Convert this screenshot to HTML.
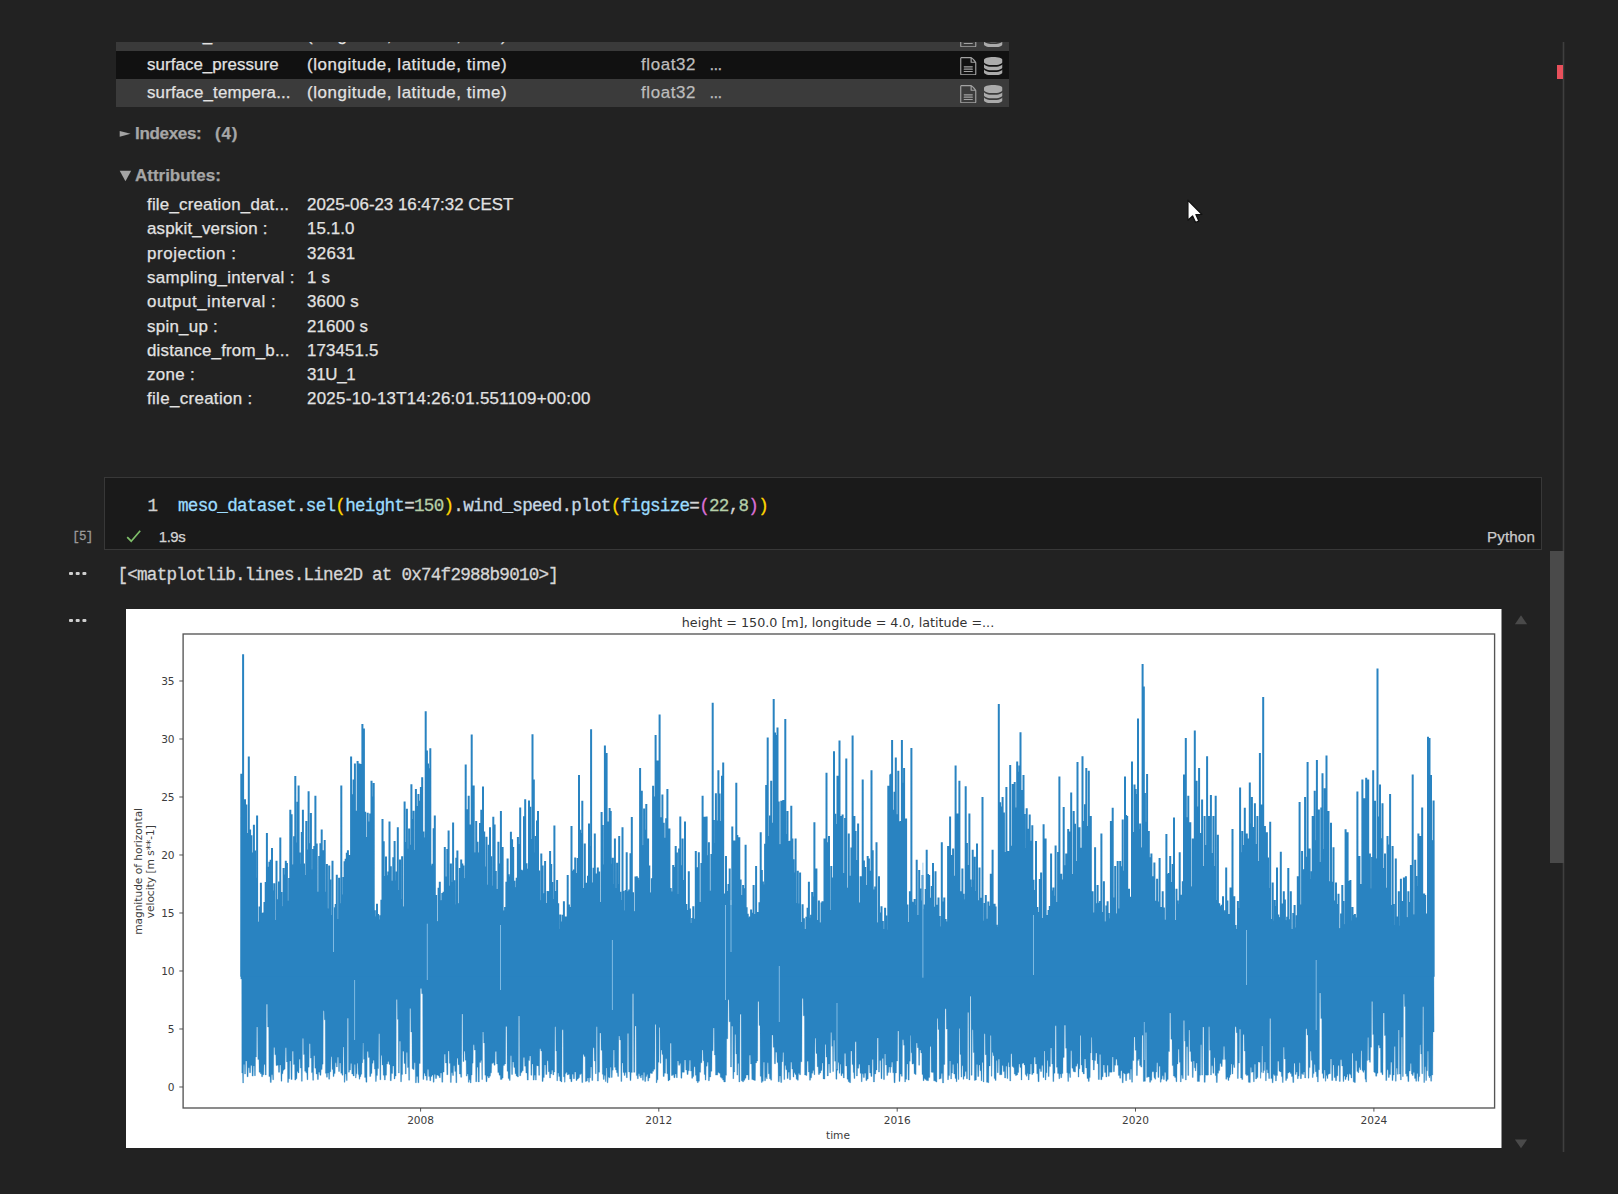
<!DOCTYPE html>
<html lang="en">
<head>
<meta charset="utf-8">
<title>Notebook output</title>
<style>
html,body{margin:0;padding:0;}
body{width:1618px;height:1194px;overflow:hidden;background:#222222;position:relative;
  font-family:"Liberation Sans","DejaVu Sans",sans-serif;color:#e4e4e4;}
.abs{position:absolute;white-space:nowrap;}
.ui{font-family:"Liberation Sans","DejaVu Sans",sans-serif;font-size:16.9px;line-height:20px;color:#e2e2e2;-webkit-text-stroke:0.25px;}
.row{position:absolute;left:116px;width:893px;}
.mono{font-family:"Liberation Mono","DejaVu Sans Mono",monospace;-webkit-text-stroke:0.3px;}
.hdr{font-weight:bold;color:#a6a6a6;font-size:17px;}
.dim{color:#bdbdbd;}
</style>
</head>
<body>

<!-- xarray variable table (scrolled) -->
<div class="row" style="top:42px;height:9px;background:#3a3a3a;overflow:hidden;">
  <div class="abs ui" style="left:31px;top:-16px;letter-spacing:0.069px;">surface_latent...</div>
  <div class="abs ui" style="left:191px;top:-16px;letter-spacing:0.564px;">(longitude, latitude, time)</div>
  <div class="abs ui dim" style="left:525px;top:-16px;letter-spacing:0.626px;">float32 &nbsp;...</div>
</div>
<div class="row" style="top:51px;height:28px;background:#111111;"></div>
<div class="row" style="top:79px;height:28px;background:#3b3b3b;"></div>

<div class="abs ui" id="t_sp" style="letter-spacing:0.069px;left:147px;top:55px;">surface_pressure</div>
<div class="abs ui" id="t_sp2" style="letter-spacing:0.564px;left:307px;top:55px;">(longitude, latitude, time)</div>
<div class="abs ui dim" id="t_sp3" style="letter-spacing:0.626px;left:641px;top:55px;">float32</div>
<div class="abs ui dim" style="left:709.5px;top:55px;letter-spacing:-0.7px;">...</div>

<div class="abs ui" id="t_st" style="letter-spacing:0.16px;left:147px;top:83px;">surface_tempera...</div>
<div class="abs ui" id="t_st2" style="letter-spacing:0.564px;left:307px;top:83px;">(longitude, latitude, time)</div>
<div class="abs ui dim" id="t_st3" style="letter-spacing:0.626px;left:641px;top:83px;">float32</div>
<div class="abs ui dim" style="left:709.5px;top:83px;letter-spacing:-0.7px;">...</div>

<svg width="0" height="0" style="position:absolute"><defs><symbol id="ic-doc" viewBox="0 0 32 32"><path d="M28.681 7.159c-0.694-0.947-1.662-2.053-2.724-3.116s-2.169-2.030-3.116-2.724c-1.612-1.182-2.393-1.319-2.841-1.319h-15.5c-1.378 0-2.5 1.121-2.5 2.5v27c0 1.378 1.122 2.5 2.5 2.5h23c1.378 0 2.5-1.122 2.5-2.5v-19.5c0-0.448-0.137-1.23-1.319-2.841zM24.543 5.457c0.959 0.959 1.712 1.825 2.268 2.543h-4.811v-4.811c0.718 0.556 1.584 1.309 2.543 2.268zM28 29.5c0 0.271-0.229 0.5-0.5 0.5h-23c-0.271 0-0.5-0.229-0.5-0.5v-27c0-0.271 0.229-0.5 0.5-0.5 0 0 15.499-0 15.500 0v7c0 0.552 0.448 1 1 1h7v19.500z"/><path d="M23 26h-14c-0.552 0-1-0.448-1-1s0.448-1 1-1h14c0.552 0 1 0.448 1 1s-0.448 1-1 1z"/><path d="M23 22h-14c-0.552 0-1-0.448-1-1s0.448-1 1-1h14c0.552 0 1 0.448 1 1s-0.448 1-1 1z"/><path d="M23 18h-14c-0.552 0-1-0.448-1-1s0.448-1 1-1h14c0.552 0 1 0.448 1 1s-0.448 1-1 1z"/></symbol><symbol id="ic-db" viewBox="0 0 32 32"><path d="M16 0c-8.837 0-16 2.239-16 5v4c0 2.761 7.163 5 16 5s16-2.239 16-5v-4c0-2.761-7.163-5-16-5z"/><path d="M16 17c-8.837 0-16-2.239-16-5v6c0 2.761 7.163 5 16 5s16-2.239 16-5v-6c0 2.761-7.163 5-16 5z"/><path d="M16 26c-8.837 0-16-2.239-16-5v6c0 2.761 7.163 5 16 5s16-2.239 16-5v-6c0 2.761-7.163 5-16 5z"/></symbol></defs></svg>
<div class="abs" style="left:958.5px;top:42px;width:50px;height:5.3px;overflow:hidden;"><svg class="abs" style="left:0;top:-13.2px;fill:#a2a2a2" width="18.5" height="18.5"><use href="#ic-doc"/></svg><svg class="abs" style="left:25.7px;top:-13.2px;fill:#ababab" width="18.5" height="18.5"><use href="#ic-db"/></svg></div>
<svg class="abs" style="left:958.5px;top:56.8px;fill:#a2a2a2" width="18.5" height="18.5"><use href="#ic-doc"/></svg>
<svg class="abs" style="left:984.2px;top:56.8px;fill:#ababab" width="18.5" height="18.5"><use href="#ic-db"/></svg>
<svg class="abs" style="left:958.5px;top:84.8px;fill:#a2a2a2" width="18.5" height="18.5"><use href="#ic-doc"/></svg>
<svg class="abs" style="left:984.2px;top:84.8px;fill:#ababab" width="18.5" height="18.5"><use href="#ic-db"/></svg>

<!-- sections -->
<svg class="abs" style="left:119px;top:130px;" width="13" height="8" viewBox="0 0 13 8"><path d="M0.7 0.9 L11.6 3.8 L0.7 6.7 Z" fill="#a4a4a4"/></svg>
<div class="abs ui hdr" id="t_idx" style="letter-spacing:-0.323px;left:135px;top:124px;">Indexes:</div>
<div class="abs ui hdr" id="t_idxn" style="letter-spacing:0.773px;left:215px;top:124px;">(4)</div>
<svg class="abs" style="left:119px;top:170px;" width="13" height="12" viewBox="0 0 13 12"><path d="M0.7 0.8 L12.2 0.8 L6.45 11.2 Z" fill="#a4a4a4"/></svg>
<div class="abs ui hdr" id="t_att" style="letter-spacing:-0.014px;left:135px;top:165.5px;">Attributes:</div>

<div class="abs ui" id="ak0" style="letter-spacing:0.208px;left:147px;top:195px;">file_creation_dat...</div>
<div class="abs ui" id="av0" style="letter-spacing:-0.016px;left:307px;top:195px;">2025-06-23 16:47:32 CEST</div>
<div class="abs ui" id="ak1" style="letter-spacing:0.203px;left:147px;top:219px;">aspkit_version :</div>
<div class="abs ui" id="av1" style="letter-spacing:0.105px;left:307px;top:219px;">15.1.0</div>
<div class="abs ui" id="ak2" style="letter-spacing:0.581px;left:147px;top:244px;">projection :</div>
<div class="abs ui" id="av2" style="letter-spacing:0.323px;left:307px;top:244px;">32631</div>
<div class="abs ui" id="ak3" style="letter-spacing:0.362px;left:147px;top:268px;">sampling_interval :</div>
<div class="abs ui" id="av3" style="letter-spacing:0.151px;left:307px;top:268px;">1 s</div>
<div class="abs ui" id="ak4" style="letter-spacing:0.529px;left:147px;top:292px;">output_interval :</div>
<div class="abs ui" id="av4" style="letter-spacing:0.18px;left:307px;top:292px;">3600 s</div>
<div class="abs ui" id="ak5" style="letter-spacing:0.271px;left:147px;top:317px;">spin_up :</div>
<div class="abs ui" id="av5" style="letter-spacing:0.142px;left:307px;top:317px;">21600 s</div>
<div class="abs ui" id="ak6" style="letter-spacing:0.203px;left:147px;top:341px;">distance_from_b...</div>
<div class="abs ui" id="av6" style="letter-spacing:0.131px;left:307px;top:341px;">173451.5</div>
<div class="abs ui" id="ak7" style="letter-spacing:0.347px;left:147px;top:365px;">zone :</div>
<div class="abs ui" id="av7" style="letter-spacing:-0.256px;left:307px;top:365px;">31U_1</div>
<div class="abs ui" id="ak8" style="letter-spacing:0.335px;left:147px;top:389px;">file_creation :</div>
<div class="abs ui" id="av8" style="letter-spacing:0.287px;left:307px;top:389px;">2025-10-13T14:26:01.551109+00:00</div>

<!-- code cell -->
<div class="abs" style="left:104px;top:477px;width:1436px;height:71px;background:#1a1a1a;border:1px solid #383838;"></div>
<div class="abs mono" id="t_ln" style="left:147.5px;top:495.6px;font-size:17.6px;line-height:20px;color:#cfcfcf;">1</div>
<div class="abs mono" id="t_code" style="letter-spacing:-0.728px;left:178px;top:495.6px;font-size:17.6px;line-height:20px;color:#d4d4d4;"><span style="color:#9cdcfe">meso_dataset</span>.<span style="color:#9cdcfe">sel</span><span style="color:#ffd700">(</span><span style="color:#9cdcfe">height</span>=<span style="color:#b5cea8">150</span><span style="color:#ffd700">)</span>.<span style="color:#c8d8e4">wind_speed</span>.<span style="color:#c8d8e4">plot</span><span style="color:#ffd700">(</span><span style="color:#9cdcfe">figsize</span>=<span style="color:#da70d6">(</span><span style="color:#b5cea8">22</span>,<span style="color:#b5cea8">8</span><span style="color:#da70d6">)</span><span style="color:#ffd700">)</span></div>

<div class="abs mono" id="t_exec" style="letter-spacing:-0.805px;left:72.3px;top:529.1px;font-size:12.5px;line-height:16px;color:#9a9a9a;">[5]</div>
<svg class="abs" style="left:124px;top:528px;" width="20" height="16" viewBox="0 0 20 16"><path d="M3.2 9.2 L7.2 13.2 L16.2 2.8" fill="none" stroke="#7fbf6a" stroke-width="1.7"/></svg>
<div class="abs ui" id="t_time" style="letter-spacing:-0.49px;left:158.8px;top:527.3px;font-size:15px;color:#d4d4d4;">1.9s</div>
<div class="abs ui" id="t_py" style="letter-spacing:0.117px;left:1487px;top:527.2px;font-size:15.2px;color:#cccccc;">Python</div>

<!-- output -->
<div class="abs" style="left:69.2px;top:571.6px;width:3.4px;height:3.4px;border-radius:1px;background:#cfcfcf;box-shadow:6.7px 0 0 #cfcfcf,13.4px 0 0 #cfcfcf;"></div>
<div class="abs mono" id="t_out" style="letter-spacing:-0.767px;left:117.5px;top:564.5px;font-size:17.6px;line-height:20px;color:#d6d6d6;">[&lt;matplotlib.lines.Line2D at 0x74f2988b9010&gt;]</div>
<div class="abs" style="left:69.2px;top:618.6px;width:3.4px;height:3.4px;border-radius:1px;background:#cfcfcf;box-shadow:6.7px 0 0 #cfcfcf,13.4px 0 0 #cfcfcf;"></div>

<svg class="abs" style="left:126px;top:609px;" width="1375.5" height="539.3" viewBox="126 609 1375.5 539.3" font-family="'DejaVu Sans','Liberation Sans',sans-serif" fill="#3c3c3c">
<rect x="126" y="609" width="1375.5" height="539.3" fill="#ffffff"/>
<path d="M241.3 816.8 242.2 816.8 243.1 816.8 244.1 816.8 245.0 833.6 246.3 833.6 247.5 833.6 248.8 835.8 250.1 853.0 251.4 853.0 252.6 853.0 253.9 878.2 255.0 878.2 256.0 922.2 257.1 922.2 258.4 922.2 259.6 922.2 260.9 922.2 262.1 913.6 263.3 913.6 264.5 913.6 265.7 913.0 266.9 902.4 268.2 882.4 269.4 867.3 270.7 891.0 272.0 891.0 273.1 920.6 274.2 920.6 275.4 920.6 276.5 920.6 277.8 920.6 279.0 899.7 280.3 906.8 281.4 906.8 282.5 906.8 283.6 906.8 284.7 906.8 285.8 901.3 286.9 901.3 288.1 901.3 289.2 901.3 290.3 901.3 291.6 878.5 292.8 864.9 294.1 864.9 295.3 864.9 296.4 843.1 297.5 852.9 298.6 864.2 299.7 864.2 300.8 864.2 301.8 864.2 302.9 875.6 304.0 875.6 305.2 875.6 306.3 875.6 307.5 875.6 308.6 849.9 309.7 870.0 310.9 870.0 312.0 870.0 313.1 870.0 314.3 870.0 315.4 892.2 316.7 892.2 317.9 892.2 319.2 892.2 320.4 892.2 321.7 882.7 322.7 882.7 323.7 892.2 324.7 892.2 325.8 908.9 326.9 908.9 328.1 908.9 329.2 915.6 330.3 915.6 331.4 915.6 332.5 915.6 333.6 915.6 334.6 908.9 335.7 919.4 336.8 919.4 337.9 919.4 339.1 919.4 340.2 919.4 341.3 903.8 342.4 903.8 343.5 895.1 344.6 895.1 345.7 877.5 346.8 861.8 347.9 859.2 349.0 855.7 350.0 855.7 351.1 855.7 352.4 855.6 353.6 815.4 354.9 815.4 355.8 815.4 356.7 815.4 357.6 815.4 358.5 811.3 359.4 803.4 360.4 803.4 361.4 794.4 362.4 794.4 363.1 812.3 363.9 837.5 365.2 837.5 366.4 837.5 367.7 837.5 369.0 837.5 370.2 822.0 371.5 822.0 372.6 910.7 373.7 917.0 374.8 917.0 375.9 917.0 377.0 920.1 378.1 920.1 379.2 920.1 380.3 920.1 381.4 920.1 382.5 915.7 383.7 900.3 384.8 876.6 386.0 876.6 387.2 876.6 388.3 875.7 389.5 881.3 390.8 881.3 392.1 881.3 393.3 881.3 394.6 881.3 395.7 881.1 396.7 890.6 397.8 890.6 398.9 899.5 400.0 899.5 401.0 907.1 402.1 907.1 403.4 907.1 404.6 907.1 405.7 907.1 406.9 849.3 408.0 849.3 409.1 849.3 410.3 849.3 411.4 845.2 412.5 850.4 413.6 850.4 414.8 850.4 415.9 850.4 417.2 850.4 418.4 806.6 419.7 806.6 420.9 832.0 422.2 838.1 423.4 838.1 424.5 838.1 425.7 838.1 426.9 838.1 428.0 768.8 429.1 866.0 430.3 866.0 431.4 866.0 432.6 866.0 433.7 895.6 434.8 921.8 436.1 921.8 437.3 921.8 438.6 921.8 439.8 921.8 441.1 900.8 442.3 900.8 443.6 900.8 444.8 893.4 446.1 892.3 447.3 886.2 448.6 886.2 449.7 886.2 450.9 886.2 452.0 886.2 453.1 905.1 454.2 905.1 455.2 905.1 456.3 905.1 457.4 905.1 458.7 903.7 459.9 903.7 461.2 903.7 462.3 878.7 463.4 878.7 464.6 878.7 465.7 878.7 466.7 878.7 467.7 854.1 468.7 854.1 469.7 835.8 470.7 835.8 471.7 835.8 472.7 852.9 473.7 852.9 475.0 852.9 476.2 853.0 477.5 853.0 478.8 853.0 480.0 869.7 481.3 869.7 482.1 869.7 483.0 869.7 484.2 869.7 485.3 885.2 486.5 885.2 487.7 885.2 488.8 885.2 490.0 886.2 491.1 886.2 492.2 886.2 493.3 886.2 494.6 889.4 495.8 889.4 497.1 889.4 498.4 889.4 499.6 902.1 500.9 902.1 501.8 911.1 502.6 911.1 503.9 911.1 505.1 911.1 506.4 911.1 507.6 907.6 508.7 882.3 509.8 876.9 510.9 876.9 512.1 881.3 513.2 887.8 514.4 887.8 515.5 887.8 516.7 887.8 517.9 887.8 519.0 878.2 520.2 871.0 521.5 871.0 522.7 871.0 524.0 871.0 525.2 871.0 526.5 869.2 527.7 869.2 529.0 869.2 530.2 869.2 531.3 839.4 532.5 853.0 533.8 853.0 534.8 853.0 535.9 853.0 537.0 871.1 538.0 900.8 539.1 900.8 540.2 900.8 541.3 900.8 542.6 900.8 543.8 903.5 545.1 903.5 546.3 903.5 547.6 903.5 548.8 903.5 550.1 891.8 551.2 899.4 552.2 899.4 553.3 903.3 554.4 903.3 555.3 903.3 556.2 903.8 557.1 929.8 558.2 929.8 559.3 929.8 560.3 929.8 561.4 929.8 562.7 923.8 563.9 923.8 564.8 927.7 565.7 927.7 566.7 927.7 567.7 927.7 568.9 927.7 570.2 907.4 571.5 907.4 572.7 907.4 574.0 873.5 575.2 873.5 576.5 873.5 577.7 873.5 579.0 873.5 580.1 858.6 581.2 888.5 582.3 888.5 583.5 888.5 584.8 888.5 585.8 888.5 586.9 883.3 588.0 883.3 589.0 883.3 590.1 883.0 591.1 883.0 592.3 883.0 593.6 904.1 594.8 904.1 595.8 904.1 596.8 904.1 597.8 904.1 599.1 902.4 600.4 902.4 601.6 902.4 602.7 902.4 603.8 864.9 604.9 864.9 605.8 864.9 606.6 837.2 607.6 837.2 608.6 837.2 609.6 864.3 610.7 864.3 611.7 884.7 612.8 884.7 613.9 888.6 614.9 888.6 616.0 888.6 617.1 888.6 618.1 892.2 619.2 900.4 620.3 900.4 621.4 900.4 622.5 911.0 623.5 911.0 624.6 911.0 625.7 911.0 626.7 911.0 628.0 891.8 629.2 891.8 630.5 892.8 631.8 911.8 633.0 911.8 634.3 911.8 635.5 911.8 636.8 911.8 637.9 880.8 639.0 880.8 640.1 880.8 640.9 880.8 641.8 845.7 642.9 845.7 644.1 845.7 645.2 845.7 646.3 839.2 647.2 866.1 648.1 893.1 649.3 893.1 650.6 893.1 651.9 893.1 653.1 893.1 654.4 878.8 655.6 797.0 656.6 797.0 657.6 778.6 658.6 817.7 659.6 848.4 660.6 848.4 661.5 848.4 662.4 848.4 663.7 848.4 664.9 838.3 666.2 838.7 667.4 838.7 668.4 888.5 669.4 892.1 670.7 892.1 672.0 892.1 673.2 892.1 674.5 892.1 675.7 894.7 676.9 894.7 678.0 894.7 679.1 894.7 680.3 894.7 681.4 880.4 682.6 880.4 683.8 904.4 685.0 910.4 686.3 910.4 687.5 910.4 688.8 923.4 689.9 923.4 691.1 923.4 692.2 923.4 693.3 923.4 694.6 919.2 695.8 919.2 696.8 919.2 697.8 902.4 698.8 902.4 700.1 902.4 701.4 902.4 702.6 902.4 703.6 863.4 704.6 839.8 705.6 855.8 706.6 855.8 707.8 891.2 708.9 891.2 710.2 891.2 711.4 891.2 712.7 891.2 713.8 854.4 714.8 843.7 715.9 843.7 717.2 843.7 718.4 821.5 719.6 821.5 720.8 821.5 722.0 893.9 723.2 895.3 724.1 895.3 725.1 895.3 726.0 895.3 727.2 895.3 728.5 905.6 729.7 905.6 731.0 905.6 732.3 905.6 733.3 905.6 734.3 850.0 735.3 850.0 736.3 877.0 737.3 877.0 738.3 879.9 739.3 895.5 740.6 895.5 741.8 895.5 743.1 895.5 744.3 907.7 745.6 914.2 746.6 918.7 747.7 918.7 748.8 918.7 749.8 918.7 751.1 918.7 752.4 916.9 753.6 914.5 754.9 914.5 756.1 914.5 757.3 914.5 758.4 912.5 759.5 912.5 760.7 912.4 761.8 902.7 762.9 885.1 764.0 885.1 765.1 885.1 766.2 885.1 766.9 844.3 767.7 836.5 768.9 836.5 770.0 836.5 771.2 836.5 772.5 823.3 773.7 823.3 775.0 823.3 776.2 801.9 777.5 844.7 778.7 844.7 780.0 844.7 781.3 844.7 782.3 844.7 783.3 815.5 784.3 834.6 785.3 834.6 786.4 841.6 787.5 841.6 788.8 841.6 790.1 841.6 791.3 859.8 792.4 873.1 793.4 873.1 794.5 903.6 795.6 903.6 796.7 904.1 797.8 904.1 799.0 922.6 800.1 922.6 801.4 922.6 802.6 929.4 803.9 929.4 805.1 929.4 806.4 929.4 807.6 929.4 808.9 918.3 810.0 918.3 811.1 918.3 812.2 918.3 813.3 919.6 814.4 919.6 815.4 920.5 816.4 920.5 817.7 923.0 818.9 923.0 820.2 923.0 821.5 923.0 822.5 923.0 823.5 913.1 824.5 913.1 825.5 913.1 826.5 868.4 827.7 910.5 829.0 910.5 830.1 910.5 831.3 910.5 832.2 910.5 833.1 903.6 834.0 903.6 835.2 903.6 836.4 824.6 837.5 824.6 838.5 830.8 839.5 830.8 840.4 830.8 841.3 873.6 842.6 873.6 843.8 873.6 845.1 888.3 846.3 888.3 847.6 888.3 848.8 888.3 850.1 888.3 851.4 876.3 852.6 876.3 853.5 848.1 854.4 860.5 855.6 860.5 856.9 903.0 858.1 903.0 859.4 922.0 860.7 922.0 861.7 922.0 862.7 922.0 863.9 922.0 865.2 885.5 866.4 885.5 867.7 885.5 868.9 885.5 870.2 871.2 871.5 890.1 872.7 890.1 874.0 890.1 875.2 922.9 876.5 922.9 877.7 922.9 879.0 922.9 880.3 922.9 881.5 929.4 882.8 929.4 884.0 929.4 885.1 930.3 886.2 930.3 887.2 930.3 888.3 930.3 889.3 930.3 890.3 807.4 891.2 810.3 892.1 810.3 893.3 810.3 894.6 814.7 895.8 814.7 897.1 822.0 898.3 822.0 899.5 822.0 900.7 822.0 901.9 822.0 903.0 872.6 904.1 872.6 905.1 904.9 906.1 922.6 907.4 922.6 908.6 922.6 909.9 922.6 910.7 922.6 911.4 907.5 912.5 907.5 913.5 905.8 914.6 905.8 915.6 915.4 916.7 915.4 917.9 915.4 919.2 915.4 920.3 915.4 921.4 909.6 922.5 909.6 923.5 909.6 924.6 909.6 925.7 909.6 926.7 905.0 928.0 898.3 929.2 898.3 930.5 898.3 931.8 907.3 933.0 907.3 934.3 907.3 935.5 907.3 936.5 907.3 937.5 916.6 938.5 927.1 939.6 927.1 940.7 927.1 941.8 927.1 943.1 927.1 944.3 922.1 945.6 922.1 946.8 922.1 948.1 922.1 949.1 922.1 950.1 905.4 951.1 905.4 952.1 905.4 953.1 905.4 954.4 905.4 955.6 876.3 956.6 876.3 957.6 874.8 958.5 909.1 959.4 909.1 960.4 909.1 961.4 909.1 962.4 909.1 963.5 899.9 964.6 899.9 965.7 899.9 966.9 899.9 968.2 879.9 969.4 887.4 970.5 887.4 971.6 887.4 972.7 887.4 973.8 891.6 974.8 891.6 975.9 900.8 977.0 900.8 978.2 913.1 979.5 913.1 980.5 913.1 981.5 921.2 982.5 921.2 983.6 921.2 984.7 921.2 985.8 921.2 987.0 919.3 988.3 919.3 989.5 921.7 990.8 921.7 991.7 921.7 992.6 921.7 993.6 921.7 994.6 925.3 995.6 927.4 996.7 927.4 997.8 927.4 998.8 927.4 1000.1 927.4 1001.4 813.0 1002.6 852.4 1003.9 852.4 1005.1 873.8 1006.4 873.8 1007.4 884.1 1008.4 884.1 1009.3 884.1 1010.2 884.1 1011.4 884.1 1012.7 852.7 1013.7 852.7 1014.7 852.7 1015.9 852.7 1017.2 808.1 1018.3 808.1 1019.4 792.4 1020.5 792.4 1021.5 792.4 1022.5 814.6 1023.5 848.5 1024.6 848.5 1025.6 873.3 1026.7 873.3 1027.7 873.3 1028.7 873.3 1029.7 873.3 1031.0 880.2 1032.3 890.4 1033.5 890.4 1034.8 907.5 1036.0 912.6 1037.3 912.6 1038.5 912.6 1039.8 918.4 1041.1 918.4 1042.3 918.4 1043.6 918.4 1044.6 918.4 1045.6 917.2 1046.6 917.2 1047.6 917.2 1048.6 917.2 1049.8 915.5 1051.1 910.6 1052.2 906.6 1053.4 896.3 1054.5 902.4 1055.6 902.4 1056.9 902.4 1058.1 902.4 1059.4 902.4 1060.3 883.9 1061.2 883.9 1062.4 883.9 1063.7 880.1 1064.9 880.1 1066.2 877.0 1067.2 877.0 1068.2 877.0 1069.2 877.0 1070.2 874.6 1071.2 874.6 1072.5 874.6 1073.7 874.6 1075.0 874.6 1076.2 861.6 1077.5 861.6 1078.5 877.1 1079.5 877.1 1080.5 877.1 1081.5 877.1 1082.5 877.1 1083.8 848.3 1085.0 826.6 1086.3 826.6 1087.5 844.5 1088.8 844.5 1089.8 918.1 1090.8 918.1 1091.7 918.1 1092.6 918.1 1093.8 918.1 1095.1 913.0 1096.3 913.0 1097.6 903.8 1098.8 903.8 1100.1 912.5 1101.4 912.5 1102.6 921.9 1103.9 921.9 1105.1 921.9 1106.4 921.9 1107.6 921.9 1108.7 918.9 1109.8 918.9 1110.9 918.9 1111.8 918.9 1112.7 898.1 1113.9 914.0 1115.2 914.0 1116.4 914.0 1117.7 914.0 1118.9 914.0 1120.2 908.9 1121.5 908.9 1122.7 871.2 1123.8 871.2 1125.0 871.2 1126.1 912.2 1127.2 912.2 1128.1 912.2 1129.0 912.2 1130.0 912.2 1131.0 906.0 1132.0 906.0 1133.3 906.0 1134.5 832.4 1135.7 832.4 1136.9 829.6 1138.0 829.6 1139.0 848.0 1140.1 848.0 1141.3 848.0 1142.6 848.0 1143.8 848.0 1144.9 822.2 1146.0 862.0 1147.1 862.0 1148.0 862.0 1148.8 862.0 1150.1 876.7 1151.4 893.4 1152.4 893.4 1153.4 901.2 1154.4 922.7 1155.3 922.7 1156.2 922.7 1157.1 922.7 1158.4 922.7 1159.6 912.6 1160.7 912.6 1161.7 912.6 1162.7 920.3 1163.9 920.3 1165.2 920.3 1166.4 920.3 1167.7 920.3 1168.9 882.5 1170.2 882.5 1171.5 882.5 1172.7 920.6 1174.0 920.6 1175.2 920.6 1176.5 920.6 1177.6 920.6 1178.7 904.7 1179.7 924.3 1180.8 924.3 1181.8 924.3 1182.8 924.3 1184.0 924.3 1184.9 881.7 1185.8 823.1 1187.0 883.8 1188.3 883.8 1189.3 886.9 1190.3 886.9 1191.6 886.9 1192.8 886.9 1193.8 886.9 1194.8 860.0 1195.7 860.0 1196.6 842.5 1197.8 848.7 1199.1 848.7 1200.1 848.7 1201.1 866.5 1202.1 866.5 1203.4 866.5 1204.6 866.5 1205.9 866.5 1207.1 847.0 1208.1 867.3 1209.1 867.3 1210.0 867.3 1210.9 867.3 1212.2 867.3 1213.4 866.4 1214.5 900.4 1215.7 900.4 1216.8 903.7 1217.9 906.8 1219.2 906.8 1220.5 906.8 1221.7 912.0 1223.0 912.0 1224.1 912.0 1225.1 912.0 1226.2 914.4 1227.4 922.8 1228.5 922.8 1229.5 922.8 1230.5 922.8 1231.5 922.8 1232.5 904.3 1233.4 925.4 1234.3 929.4 1235.5 929.4 1236.8 929.4 1237.9 929.4 1239.0 929.4 1240.1 908.7 1241.2 908.7 1242.3 852.8 1243.6 861.5 1244.8 861.5 1245.8 861.5 1246.8 861.5 1247.8 861.5 1248.8 842.6 1249.8 842.6 1250.9 864.3 1251.9 864.3 1252.9 864.3 1253.9 864.3 1254.9 864.3 1256.1 861.6 1257.4 861.6 1258.6 861.6 1259.9 861.6 1260.7 871.3 1261.4 871.3 1262.3 871.3 1263.2 871.3 1264.0 901.3 1264.9 901.3 1265.9 901.3 1266.9 901.3 1268.0 901.3 1269.1 919.5 1270.2 919.5 1271.5 921.2 1272.7 921.2 1273.8 921.2 1274.8 921.2 1275.9 921.2 1277.0 917.7 1278.2 917.7 1279.5 917.7 1280.8 917.7 1281.8 917.7 1282.8 905.8 1283.8 920.8 1284.9 920.8 1286.0 920.8 1287.2 920.8 1288.3 920.8 1289.5 929.4 1290.8 929.4 1292.1 929.4 1293.3 929.4 1294.6 929.4 1295.7 928.1 1296.8 928.1 1297.8 928.1 1298.7 915.7 1299.6 905.0 1300.9 909.4 1302.1 909.4 1303.1 909.4 1304.1 909.4 1305.1 909.4 1306.4 904.5 1307.6 904.5 1308.6 904.5 1309.6 904.5 1310.7 904.5 1311.7 879.4 1312.7 879.4 1313.7 871.7 1314.7 840.8 1315.8 840.8 1316.9 840.8 1317.9 862.4 1318.9 862.4 1320.1 862.4 1321.3 862.4 1322.5 862.4 1323.6 849.5 1324.7 849.5 1325.6 849.5 1326.5 846.1 1327.5 881.7 1328.5 881.7 1329.7 882.3 1331.0 882.3 1332.3 901.0 1333.5 901.0 1334.8 904.4 1336.0 904.4 1337.3 928.7 1338.5 928.7 1339.8 928.7 1341.1 928.7 1342.3 928.7 1343.4 924.7 1344.5 924.7 1345.6 924.7 1346.6 924.7 1347.6 896.3 1348.5 896.3 1349.4 921.1 1350.4 921.1 1351.4 921.1 1352.5 921.1 1353.6 921.1 1354.9 917.9 1356.1 917.9 1357.4 917.9 1358.4 917.9 1359.4 901.2 1360.4 901.2 1361.4 901.2 1362.4 901.2 1363.4 884.5 1364.4 839.1 1365.3 839.1 1366.2 839.1 1367.2 872.6 1368.2 872.6 1369.1 889.0 1369.9 889.0 1371.0 889.0 1372.1 889.0 1373.2 889.0 1374.1 859.0 1375.0 859.0 1376.2 859.0 1377.5 859.0 1378.7 859.0 1380.0 838.7 1381.3 868.6 1382.5 868.6 1383.8 888.3 1385.0 888.3 1386.3 888.3 1387.5 888.3 1388.8 905.4 1390.1 905.4 1391.3 905.4 1392.6 925.8 1393.7 925.8 1394.7 925.8 1395.8 925.8 1396.8 925.8 1397.8 926.3 1398.8 926.3 1399.8 926.3 1400.9 926.3 1401.9 926.3 1402.9 915.9 1403.9 915.9 1404.9 917.8 1405.9 917.8 1407.1 917.8 1408.4 917.8 1409.6 917.8 1410.9 903.8 1411.8 914.9 1412.7 914.9 1413.9 914.9 1415.2 914.9 1416.3 914.9 1417.4 886.6 1418.4 886.6 1419.3 886.6 1420.2 871.7 1421.2 907.0 1422.2 907.0 1423.2 907.0 1424.2 914.0 1425.2 922.1 1426.1 922.1 1427.1 922.1 1428.0 922.1 1428.7 922.1 1429.5 792.7 1430.2 840.7 1431.0 840.7 1432.3 840.7 1433.6 840.7 L1434.1 1031.9 1433.0 1031.9 1432.8 1074.9 1431.8 1074.9 1431.6 1081.2 1430.7 1081.2 1430.5 1075.9 1430.0 1075.9 1429.8 1077.7 1429.2 1077.7 1429.0 1075.8 1428.5 1075.8 1428.3 1051.2 1427.6 1051.2 1427.4 1070.8 1426.7 1070.8 1426.5 1080.5 1425.8 1080.5 1425.6 1066.8 1424.8 1066.8 1424.6 1082.5 1423.8 1082.5 1423.6 1006.8 1422.8 1006.8 1422.6 1073.7 1421.8 1073.7 1421.6 1054.0 1420.8 1054.0 1420.6 1044.7 1419.9 1044.7 1419.7 1076.6 1419.0 1076.6 1418.8 1081.3 1418.0 1081.3 1417.8 1073.4 1416.9 1073.4 1416.7 1081.3 1415.8 1081.3 1415.6 1078.4 1414.6 1078.4 1414.4 1072.5 1413.4 1072.5 1413.2 1075.5 1412.3 1075.5 1412.1 1074.0 1411.4 1074.0 1411.2 1063.5 1410.4 1063.5 1410.2 1071.0 1409.1 1071.0 1408.9 1081.6 1407.9 1081.6 1407.7 1076.3 1406.6 1076.3 1406.4 1073.8 1405.5 1073.8 1405.3 1006.5 1404.5 1006.5 1404.3 994.2 1403.5 994.2 1403.3 1076.6 1402.5 1076.6 1402.3 1037.2 1401.5 1037.2 1401.3 1079.9 1400.5 1079.9 1400.3 1074.0 1399.4 1074.0 1399.2 1030.1 1398.4 1030.1 1398.2 1074.3 1397.4 1074.3 1397.2 1068.3 1396.4 1068.3 1396.2 1081.2 1395.4 1081.2 1395.2 1046.4 1394.3 1046.4 1394.1 1074.9 1393.2 1074.9 1393.0 1080.6 1392.0 1080.6 1391.8 1062.2 1390.8 1062.2 1390.6 1074.6 1389.5 1074.6 1389.3 1077.4 1388.3 1077.4 1388.1 1069.8 1387.0 1069.8 1386.8 1080.5 1385.8 1080.5 1385.6 1035.5 1384.5 1035.5 1384.3 1012.9 1383.2 1012.9 1383.0 1074.7 1382.0 1074.7 1381.8 1072.4 1380.7 1072.4 1380.5 1048.1 1379.5 1048.1 1379.3 1045.3 1378.2 1045.3 1378.0 1073.2 1377.0 1073.2 1376.8 1076.2 1375.7 1076.2 1375.5 1072.7 1374.6 1072.7 1374.4 1072.0 1373.8 1072.0 1373.6 1034.6 1372.8 1034.6 1372.6 1001.5 1371.7 1001.5 1371.5 1047.2 1370.6 1047.2 1370.4 1062.3 1369.6 1062.3 1369.4 1060.1 1368.7 1060.1 1368.5 1037.4 1367.8 1037.4 1367.6 1060.6 1366.8 1060.6 1366.6 1082.1 1365.8 1082.1 1365.6 1079.2 1365.0 1079.2 1364.8 1070.3 1364.0 1070.3 1363.8 1072.3 1363.0 1072.3 1362.8 1070.6 1362.0 1070.6 1361.8 1050.7 1361.0 1050.7 1360.8 1069.7 1360.0 1069.7 1359.8 1067.5 1359.0 1067.5 1358.8 1072.7 1358.0 1072.7 1357.8 1071.4 1356.9 1071.4 1356.7 1060.7 1355.6 1060.7 1355.4 1082.6 1354.3 1082.6 1354.1 1081.8 1353.2 1081.8 1353.0 1053.3 1352.1 1053.3 1351.9 1078.0 1351.0 1078.0 1350.8 1074.6 1350.0 1074.6 1349.8 1073.8 1349.1 1073.8 1348.9 1080.5 1348.1 1080.5 1347.9 1074.3 1347.2 1074.3 1347.0 1076.9 1346.2 1076.9 1346.0 1079.5 1345.1 1079.5 1344.9 1076.1 1344.0 1076.1 1343.8 1081.5 1343.0 1081.5 1342.8 1066.0 1341.8 1066.0 1341.6 1059.8 1340.5 1059.8 1340.3 1081.4 1339.3 1081.4 1339.1 1065.6 1338.0 1065.6 1337.8 1075.8 1336.8 1075.8 1336.6 1080.8 1335.5 1080.8 1335.3 1077.5 1334.2 1077.5 1334.0 1065.1 1333.0 1065.1 1332.8 1080.5 1331.7 1080.5 1331.5 1058.9 1330.5 1058.9 1330.3 1073.8 1329.2 1073.8 1329.0 1074.2 1328.1 1074.2 1327.9 1078.5 1327.1 1078.5 1326.9 1075.6 1326.1 1075.6 1325.9 1081.2 1325.3 1081.2 1325.1 1070.0 1324.3 1070.0 1324.1 1078.3 1323.1 1078.3 1322.9 1073.6 1322.0 1073.6 1321.8 1018.5 1320.8 1018.5 1320.6 992.9 1319.6 992.9 1319.4 1069.8 1318.5 1069.8 1318.3 1082.0 1317.5 1082.0 1317.3 1076.7 1316.5 1076.7 1316.3 1071.7 1315.3 1071.7 1315.1 1064.5 1314.3 1064.5 1314.1 1073.4 1313.3 1073.4 1313.1 1077.5 1312.3 1077.5 1312.1 1060.2 1311.3 1060.2 1311.1 1051.2 1310.3 1051.2 1310.1 1067.6 1309.2 1067.6 1309.0 1078.2 1308.2 1078.2 1308.0 1035.1 1307.1 1035.1 1306.9 1028.7 1305.9 1028.7 1305.7 1077.9 1304.7 1077.9 1304.5 1072.0 1303.7 1072.0 1303.5 1074.6 1302.7 1074.6 1302.5 1073.8 1301.6 1073.8 1301.4 1078.7 1300.3 1078.7 1300.1 1062.7 1299.3 1062.7 1299.1 1076.1 1298.4 1076.1 1298.2 1078.7 1297.4 1078.7 1297.2 1072.1 1296.3 1072.1 1296.1 1074.4 1295.2 1074.4 1295.0 1063.2 1294.0 1063.2 1293.8 1082.5 1292.8 1082.5 1292.6 1076.5 1291.5 1076.5 1291.3 1073.5 1290.3 1073.5 1290.1 1072.1 1289.0 1072.1 1288.8 1073.0 1287.8 1073.0 1287.6 1078.4 1286.7 1078.4 1286.5 1080.6 1285.6 1080.6 1285.4 1058.9 1284.4 1058.9 1284.2 1047.3 1283.4 1047.3 1283.2 1082.5 1282.4 1082.5 1282.2 1076.6 1281.4 1076.6 1281.2 1071.9 1280.2 1071.9 1280.0 1071.2 1279.0 1071.2 1278.8 1061.2 1277.7 1061.2 1277.5 1075.5 1276.6 1075.5 1276.4 1080.9 1275.5 1080.9 1275.3 1075.5 1274.4 1075.5 1274.2 1074.6 1273.3 1074.6 1273.1 1082.8 1272.2 1082.8 1272.0 1078.6 1270.9 1078.6 1270.7 1018.5 1269.8 1018.5 1269.6 1078.6 1268.7 1078.6 1268.5 1073.0 1267.6 1073.0 1267.4 1069.8 1266.5 1069.8 1266.3 1080.8 1265.5 1080.8 1265.3 1062.0 1264.6 1062.0 1264.4 1070.4 1263.7 1070.4 1263.5 1072.8 1262.8 1072.8 1262.6 1046.0 1261.9 1046.0 1261.7 1072.2 1261.1 1072.2 1260.9 1078.3 1260.4 1078.3 1260.2 1062.3 1259.4 1062.3 1259.2 1061.9 1258.1 1061.9 1257.9 1077.6 1256.9 1077.6 1256.7 1078.9 1255.6 1078.9 1255.4 1064.3 1254.5 1064.3 1254.3 1081.7 1253.5 1081.7 1253.3 1071.9 1252.5 1071.9 1252.3 1072.3 1251.5 1072.3 1251.3 1067.5 1250.5 1067.5 1250.3 1082.6 1249.4 1082.6 1249.2 1082.3 1248.4 1082.3 1248.2 1075.3 1247.4 1075.3 1247.2 1075.5 1246.4 1075.5 1246.2 1074.3 1245.4 1074.3 1245.2 1051.0 1244.3 1051.0 1244.1 1034.6 1243.0 1034.6 1242.8 1079.6 1241.8 1079.6 1241.6 1078.0 1240.7 1078.0 1240.5 1029.2 1239.6 1029.2 1239.4 1063.1 1238.5 1063.1 1238.3 1078.5 1237.4 1078.5 1237.2 1032.7 1236.3 1032.7 1236.1 1026.8 1235.0 1026.8 1234.8 1067.6 1233.9 1067.6 1233.7 1064.8 1233.1 1064.8 1232.9 1073.9 1232.1 1073.9 1231.9 1064.1 1231.1 1064.1 1230.9 1074.8 1230.1 1074.8 1229.9 1077.4 1229.1 1077.4 1228.9 1080.5 1228.0 1080.5 1227.8 1077.3 1226.9 1077.3 1226.7 1079.2 1225.8 1079.2 1225.6 1059.6 1224.7 1059.6 1224.5 1046.6 1223.6 1046.6 1223.4 1059.5 1222.4 1059.5 1222.2 1066.5 1221.2 1066.5 1221.0 1063.5 1219.9 1063.5 1219.7 1070.6 1218.7 1070.6 1218.5 1073.3 1217.5 1073.3 1217.3 1082.5 1216.3 1082.5 1216.1 1075.5 1215.2 1075.5 1215.0 1057.7 1214.1 1057.7 1213.9 1073.3 1212.9 1073.3 1212.7 1065.8 1211.6 1065.8 1211.4 1074.9 1210.6 1074.9 1210.4 1050.2 1209.7 1050.2 1209.5 1026.8 1208.7 1026.8 1208.5 1075.1 1207.7 1075.1 1207.5 1075.3 1206.6 1075.3 1206.4 1075.0 1205.4 1075.0 1205.2 1082.3 1204.1 1082.3 1203.9 1027.1 1202.8 1027.1 1202.6 1075.1 1201.7 1075.1 1201.5 1044.8 1200.7 1044.8 1200.5 1075.3 1199.7 1075.3 1199.5 1081.5 1198.6 1081.5 1198.4 1081.4 1197.3 1081.4 1197.1 1063.1 1196.2 1063.1 1196.0 1071.0 1195.4 1071.0 1195.2 1067.8 1194.4 1067.8 1194.2 1061.1 1193.4 1061.1 1193.2 1077.4 1192.3 1077.4 1192.1 1061.5 1191.0 1061.5 1190.8 1051.6 1189.9 1051.6 1189.7 1030.0 1188.9 1030.0 1188.7 1075.4 1187.8 1075.4 1187.6 1046.7 1186.5 1046.7 1186.3 1080.0 1185.4 1080.0 1185.2 1041.1 1184.6 1041.1 1184.4 1020.5 1183.5 1020.5 1183.3 1078.5 1182.4 1078.5 1182.2 1075.3 1181.4 1075.3 1181.2 1081.9 1180.4 1081.9 1180.2 1062.3 1179.3 1062.3 1179.1 1049.3 1178.2 1049.3 1178.0 1064.0 1177.1 1064.0 1176.9 1081.8 1176.0 1081.8 1175.8 1077.4 1174.7 1077.4 1174.5 1076.1 1173.4 1076.1 1173.2 1065.6 1172.2 1065.6 1172.0 1039.3 1170.9 1039.3 1170.7 1013.1 1169.7 1013.1 1169.5 1051.6 1168.4 1051.6 1168.2 1079.4 1167.2 1079.4 1167.0 1081.2 1165.9 1081.2 1165.7 1072.6 1164.6 1072.6 1164.4 1079.5 1163.4 1079.5 1163.2 1075.8 1162.3 1075.8 1162.1 1079.3 1161.3 1079.3 1161.1 1082.2 1160.3 1082.2 1160.1 1066.3 1159.1 1066.3 1158.9 1077.4 1157.9 1077.4 1157.7 1062.7 1156.8 1062.7 1156.6 1072.0 1155.9 1072.0 1155.7 1079.2 1154.9 1079.2 1154.7 1077.7 1154.0 1077.7 1153.8 1071.8 1153.0 1071.8 1152.8 1071.8 1152.0 1071.8 1151.8 1080.3 1150.8 1080.3 1150.6 1082.3 1149.6 1082.3 1149.4 1076.9 1148.5 1076.9 1148.3 1076.8 1147.6 1076.8 1147.4 1077.4 1146.6 1077.4 1146.4 1032.5 1145.6 1032.5 1145.4 1081.3 1144.5 1081.3 1144.3 1081.4 1143.3 1081.4 1143.1 1035.2 1142.0 1035.2 1141.8 1067.1 1140.8 1067.1 1140.6 1065.6 1139.6 1065.6 1139.4 1059.1 1138.6 1059.1 1138.4 1060.4 1137.6 1060.4 1137.4 1075.6 1136.4 1075.6 1136.2 1050.2 1135.2 1050.2 1135.0 1036.9 1134.0 1036.9 1133.8 1060.6 1132.7 1060.6 1132.5 1082.2 1131.6 1082.2 1131.4 1069.3 1130.6 1069.3 1130.4 1079.4 1129.6 1079.4 1129.4 1073.2 1128.7 1073.2 1128.5 1072.7 1127.8 1072.7 1127.6 1073.8 1126.8 1073.8 1126.6 1080.7 1125.6 1080.7 1125.4 1073.9 1124.5 1073.9 1124.3 1073.0 1123.4 1073.0 1123.2 1082.8 1122.2 1082.8 1122.0 1070.7 1120.9 1070.7 1120.7 1078.2 1119.7 1078.2 1119.5 1075.4 1118.4 1075.4 1118.2 1065.2 1117.2 1065.2 1117.0 1059.2 1115.9 1059.2 1115.7 1065.3 1114.6 1065.3 1114.4 1071.7 1113.4 1071.7 1113.2 1057.0 1112.3 1057.0 1112.1 1072.2 1111.4 1072.2 1111.2 1072.2 1110.5 1072.2 1110.3 1072.3 1109.4 1072.3 1109.2 1076.3 1108.3 1076.3 1108.1 1065.3 1107.1 1065.3 1106.9 1077.0 1105.9 1077.0 1105.7 1072.5 1104.6 1072.5 1104.4 1065.1 1103.3 1065.1 1103.1 1076.7 1102.1 1076.7 1101.9 1079.8 1100.8 1079.8 1100.6 1054.4 1099.6 1054.4 1099.4 1079.5 1098.3 1079.5 1098.1 1063.7 1097.1 1063.7 1096.9 1053.1 1095.8 1053.1 1095.6 1060.6 1094.5 1060.6 1094.3 1069.9 1093.3 1069.9 1093.1 1059.9 1092.2 1059.9 1092.0 1037.6 1091.3 1037.6 1091.1 1053.0 1090.4 1053.0 1090.2 1077.5 1089.4 1077.5 1089.2 1081.4 1088.3 1081.4 1088.1 1078.5 1087.0 1078.5 1086.8 1067.9 1085.8 1067.9 1085.6 1059.0 1084.5 1059.0 1084.3 1073.9 1083.2 1073.9 1083.0 1071.9 1082.1 1071.9 1081.9 1065.1 1081.1 1065.1 1080.9 1035.5 1080.1 1035.5 1079.9 1068.7 1079.1 1068.7 1078.9 1077.1 1078.1 1077.1 1077.9 1063.8 1077.0 1063.8 1076.8 1066.2 1075.7 1066.2 1075.5 1072.1 1074.4 1072.1 1074.2 1071.6 1073.2 1071.6 1073.0 1068.3 1071.9 1068.3 1071.7 1050.8 1070.8 1050.8 1070.6 1077.4 1069.8 1077.4 1069.6 1073.6 1068.8 1073.6 1068.6 1081.4 1067.8 1081.4 1067.6 1072.7 1066.8 1072.7 1066.6 1048.2 1065.7 1048.2 1065.5 1025.2 1064.4 1025.2 1064.2 1057.4 1063.1 1057.4 1062.9 1073.6 1061.9 1073.6 1061.7 1077.7 1060.8 1077.7 1060.6 1074.0 1059.9 1074.0 1059.7 1078.8 1058.9 1078.8 1058.7 1073.4 1057.6 1073.4 1057.4 1067.2 1056.4 1067.2 1056.2 1025.8 1055.2 1025.8 1055.0 1073.2 1054.0 1073.2 1053.8 1081.6 1052.9 1081.6 1052.7 1063.9 1051.8 1063.9 1051.6 1047.9 1050.6 1047.9 1050.4 1066.6 1049.3 1066.6 1049.1 1076.6 1048.2 1076.6 1048.0 1060.4 1047.2 1060.4 1047.0 1072.8 1046.2 1072.8 1046.0 1079.9 1045.2 1079.9 1045.0 1051.1 1044.2 1051.1 1044.0 1077.5 1043.0 1077.5 1042.8 1065.6 1041.8 1065.6 1041.6 1071.5 1040.5 1071.5 1040.3 1068.7 1039.3 1068.7 1039.1 1081.7 1038.0 1081.7 1037.8 1073.8 1036.8 1073.8 1036.6 1064.0 1035.5 1064.0 1035.3 1057.3 1034.2 1057.3 1034.0 1072.9 1033.0 1072.9 1032.8 1074.6 1031.7 1074.6 1031.5 1064.0 1030.5 1064.0 1030.3 1074.1 1029.3 1074.1 1029.1 1079.9 1028.3 1079.9 1028.1 1073.5 1027.3 1073.5 1027.1 1076.2 1026.3 1076.2 1026.1 1074.6 1025.2 1074.6 1025.0 1065.0 1024.1 1065.0 1023.9 1063.0 1023.1 1063.0 1022.9 1063.5 1022.1 1063.5 1021.9 1080.0 1021.1 1080.0 1020.9 1067.4 1020.0 1067.4 1019.8 1063.9 1018.9 1063.9 1018.7 1072.4 1017.8 1072.4 1017.6 1074.9 1016.7 1074.9 1016.5 1075.6 1015.4 1075.6 1015.2 1074.1 1014.3 1074.1 1014.1 1067.6 1013.3 1067.6 1013.1 1066.4 1012.1 1066.4 1011.9 1053.7 1010.9 1053.7 1010.7 1081.0 1009.8 1081.0 1009.6 1066.9 1008.9 1066.9 1008.7 1062.4 1008.0 1062.4 1007.8 1078.6 1007.0 1078.6 1006.8 1066.3 1005.9 1066.3 1005.7 1078.0 1004.6 1078.0 1004.4 1071.6 1003.3 1071.6 1003.1 1065.4 1002.1 1065.4 1001.9 1074.7 1000.8 1074.7 1000.6 1074.8 999.6 1074.8 999.4 1059.3 998.4 1059.3 998.2 1072.8 997.3 1072.8 997.1 1060.4 996.3 1060.4 996.1 1080.4 995.2 1080.4 995.0 1078.6 994.2 1078.6 994.0 1055.8 993.2 1055.8 993.0 1052.6 992.2 1052.6 992.0 1076.2 991.3 1076.2 991.1 1035.5 990.3 1035.5 990.1 1065.9 989.0 1065.9 988.8 1082.7 987.8 1082.7 987.6 1082.3 986.5 1082.3 986.3 1054.7 985.3 1054.7 985.1 1033.8 984.2 1033.8 984.0 1081.9 983.2 1081.9 983.0 1062.5 982.1 1062.5 981.9 1080.8 981.1 1080.8 980.9 1070.8 980.1 1070.8 979.9 1064.9 979.0 1064.9 978.8 1076.5 977.7 1076.5 977.5 1064.5 976.6 1064.5 976.4 1080.0 975.5 1080.0 975.3 1080.4 974.4 1080.4 974.2 1052.5 973.3 1052.5 973.1 1029.8 972.3 1029.8 972.1 1075.3 971.2 1075.3 971.0 996.3 970.1 996.3 969.9 1079.9 968.9 1079.9 968.7 1012.6 967.7 1012.6 967.5 1078.7 966.4 1078.7 966.2 1071.5 965.2 1071.5 965.0 1076.2 964.1 1076.2 963.9 1079.3 963.1 1079.3 962.9 1065.8 962.0 1065.8 961.8 1077.1 961.0 1077.1 960.8 1054.4 960.0 1054.4 959.8 1028.4 959.1 1028.4 958.9 1079.4 958.2 1079.4 958.0 1063.3 957.2 1063.3 957.0 1081.7 956.2 1081.7 956.0 1078.5 955.1 1078.5 954.9 1074.0 953.8 1074.0 953.6 1064.5 952.7 1064.5 952.5 1073.0 951.7 1073.0 951.5 1078.9 950.7 1078.9 950.5 1061.1 949.7 1061.1 949.5 1075.6 948.7 1075.6 948.5 1079.7 947.6 1079.7 947.4 1029.1 946.3 1029.1 946.1 1008.7 945.0 1008.7 944.8 1064.4 943.8 1064.4 943.6 1082.9 942.5 1082.9 942.3 1073.4 941.4 1073.4 941.2 1078.6 940.3 1078.6 940.1 1079.1 939.2 1079.1 939.0 1029.5 938.1 1029.5 937.9 1018.5 937.1 1018.5 936.9 1082.1 936.1 1082.1 935.9 1081.3 935.0 1081.3 934.8 1080.8 933.7 1080.8 933.5 1072.5 932.5 1072.5 932.3 1072.2 931.2 1072.2 931.0 1046.5 930.0 1046.5 929.8 1077.4 928.7 1077.4 928.5 1080.8 927.5 1080.8 927.3 1080.5 926.3 1080.5 926.1 1079.6 925.2 1079.6 925.0 1078.4 924.2 1078.4 924.0 1080.7 923.1 1080.7 922.9 1074.5 922.0 1074.5 921.8 1053.0 920.9 1053.0 920.7 1050.1 919.8 1050.1 919.6 1065.2 918.7 1065.2 918.5 1047.7 917.4 1047.7 917.2 1043.0 916.3 1043.0 916.1 1074.6 915.2 1074.6 915.0 1073.7 914.1 1073.7 913.9 1063.7 913.1 1063.7 912.9 1064.1 912.0 1064.1 911.8 1052.8 911.1 1052.8 910.9 1035.4 910.4 1035.4 910.2 1061.3 909.4 1061.3 909.2 1080.1 908.1 1080.1 907.9 1064.1 906.9 1064.1 906.7 1079.2 905.7 1079.2 905.5 1081.9 904.7 1081.9 904.5 1045.2 903.7 1045.2 903.5 1039.7 902.5 1039.7 902.3 1076.3 901.4 1076.3 901.2 1074.1 900.2 1074.1 900.0 1081.4 899.0 1081.4 898.8 1031.1 897.8 1031.1 897.6 1061.0 896.6 1061.0 896.4 1073.0 895.3 1073.0 895.1 1082.7 894.0 1082.7 893.8 1072.8 892.8 1072.8 892.6 1062.3 891.7 1062.3 891.5 1067.1 890.8 1067.1 890.6 1072.6 889.9 1072.6 889.7 1066.9 888.9 1066.9 888.7 1072.4 887.9 1072.4 887.7 1075.6 886.8 1075.6 886.6 1064.9 885.7 1064.9 885.5 1054.0 884.7 1054.0 884.5 1079.6 883.5 1079.6 883.3 1058.5 882.2 1058.5 882.0 1078.7 881.0 1078.7 880.8 1060.4 879.7 1060.4 879.5 1072.1 878.5 1072.1 878.3 1038.1 877.2 1038.1 877.0 1070.0 876.0 1070.0 875.8 1073.9 874.7 1073.9 874.5 1081.9 873.4 1081.9 873.2 1059.4 872.2 1059.4 872.0 1076.4 870.9 1076.4 870.7 1072.9 869.7 1072.9 869.5 1064.9 868.4 1064.9 868.2 1078.9 867.2 1078.9 867.0 1080.6 865.9 1080.6 865.7 1073.2 864.6 1073.2 864.4 1077.6 863.4 1077.6 863.2 1073.8 862.3 1073.8 862.1 1081.8 861.3 1081.8 861.1 1073.3 860.1 1073.3 859.9 1064.3 858.9 1064.3 858.7 1068.3 857.6 1068.3 857.4 1076.0 856.4 1076.0 856.2 1041.8 855.1 1041.8 854.9 1078.5 854.0 1078.5 853.8 1072.4 853.2 1072.4 853.0 1064.6 852.1 1064.6 851.9 1050.9 850.8 1050.9 850.6 1082.7 849.6 1082.7 849.4 1081.8 848.3 1081.8 848.1 1079.2 847.1 1079.2 846.9 1066.0 845.8 1066.0 845.6 1053.6 844.5 1053.6 844.3 1077.9 843.3 1077.9 843.1 1073.4 842.0 1073.4 841.8 1075.7 841.0 1075.7 840.8 1064.2 840.1 1064.2 839.9 1073.3 839.1 1073.3 838.9 1062.6 838.1 1062.6 837.9 1070.2 837.1 1070.2 836.9 1079.2 835.9 1079.2 835.7 1061.2 834.7 1061.2 834.5 1040.2 833.7 1040.2 833.5 1071.6 832.7 1071.6 832.5 1046.3 831.8 1046.3 831.6 1032.5 830.8 1032.5 830.6 1072.8 829.7 1072.8 829.5 1064.0 828.5 1064.0 828.3 1075.9 827.2 1075.9 827.0 1057.1 826.1 1057.1 825.9 1044.5 825.1 1044.5 824.9 1079.1 824.1 1079.1 823.9 1078.9 823.1 1078.9 822.9 1063.1 822.1 1063.1 821.9 1070.5 820.9 1070.5 820.7 1073.0 819.7 1073.0 819.5 1074.5 818.4 1074.5 818.2 1066.7 817.2 1066.7 817.0 1053.4 816.0 1053.4 815.8 1038.3 815.0 1038.3 814.8 1074.7 814.0 1074.7 813.8 1070.6 812.9 1070.6 812.7 1073.2 811.8 1073.2 811.6 1077.8 810.7 1077.8 810.5 1080.2 809.5 1080.2 809.3 1072.0 808.4 1072.0 808.2 1061.3 807.1 1061.3 806.9 1075.4 805.9 1075.4 805.7 1075.0 804.6 1075.0 804.4 1015.8 803.3 1015.8 803.1 998.6 802.1 998.6 801.9 1061.8 800.8 1061.8 800.6 1074.8 799.6 1074.8 799.4 1073.6 798.5 1073.6 798.3 1080.3 797.4 1080.3 797.2 1079.2 796.2 1079.2 796.0 1074.5 795.1 1074.5 794.9 1072.8 794.1 1072.8 793.9 1077.1 793.0 1077.1 792.8 1069.0 791.9 1069.0 791.7 1062.3 790.8 1062.3 790.6 1079.8 789.5 1079.8 789.3 1072.3 788.3 1072.3 788.1 1078.6 787.1 1078.6 786.9 1069.7 785.9 1069.7 785.7 1065.4 784.9 1065.4 784.7 1079.6 783.9 1079.6 783.7 1052.5 782.9 1052.5 782.7 1061.7 781.9 1061.7 781.7 1082.5 780.7 1082.5 780.5 1075.9 779.5 1075.9 779.3 1081.8 778.2 1081.8 778.0 1062.6 777.0 1062.6 776.8 1052.2 775.7 1052.2 775.5 1063.8 774.4 1063.8 774.2 1047.3 773.2 1047.3 773.0 1035.0 771.9 1035.0 771.7 1080.2 770.7 1080.2 770.5 1078.7 769.5 1078.7 769.3 1073.8 768.4 1073.8 768.2 1062.8 767.4 1062.8 767.2 1078.9 766.7 1078.9 766.5 1077.4 765.7 1077.4 765.5 1080.8 764.6 1080.8 764.4 1062.2 763.5 1062.2 763.3 1081.3 762.4 1081.3 762.2 1082.4 761.3 1082.4 761.1 1076.2 760.2 1076.2 760.0 1025.4 759.1 1025.4 758.9 1001.5 757.9 1001.5 757.7 1060.9 756.8 1060.9 756.6 1062.9 755.6 1062.9 755.4 1080.4 754.3 1080.4 754.1 1080.1 753.1 1080.1 752.9 1079.5 751.8 1079.5 751.6 1063.9 750.6 1063.9 750.4 1055.3 749.4 1055.3 749.2 1079.7 748.3 1079.7 748.1 1075.0 747.3 1075.0 747.1 1075.0 746.2 1075.0 746.0 1078.3 745.0 1078.3 744.8 1080.3 743.8 1080.3 743.6 1081.8 742.5 1081.8 742.3 1080.8 741.3 1080.8 741.1 1014.3 740.0 1014.3 739.8 1081.9 738.9 1081.9 738.7 1063.5 737.9 1063.5 737.7 1075.1 736.9 1075.1 736.7 1053.9 735.9 1053.9 735.7 1034.4 734.9 1034.4 734.7 1071.9 733.9 1071.9 733.7 1078.7 732.9 1078.7 732.7 1026.2 731.7 1026.2 731.5 1066.9 730.5 1066.9 730.3 1021.8 729.2 1021.8 729.0 999.8 728.0 999.8 727.8 1038.7 726.7 1038.7 726.5 1075.3 725.6 1075.3 725.4 1081.9 724.7 1081.9 724.5 1082.0 723.8 1082.0 723.6 1080.1 722.7 1080.1 722.5 1078.3 721.5 1078.3 721.3 1077.2 720.3 1077.2 720.1 1073.2 719.1 1073.2 718.9 1072.6 717.9 1072.6 717.7 1075.1 716.7 1075.1 716.5 1075.1 715.5 1075.1 715.3 1055.0 714.4 1055.0 714.2 1028.1 713.3 1028.1 713.1 1050.8 712.1 1050.8 711.9 1071.3 710.9 1071.3 710.7 1077.0 709.6 1077.0 709.4 1080.8 708.4 1080.8 708.2 1062.2 707.3 1062.2 707.1 1066.3 706.2 1066.3 706.0 1080.1 705.2 1080.1 705.0 1074.5 704.2 1074.5 704.0 1060.8 703.2 1060.8 703.0 1050.1 702.1 1050.1 701.9 1062.8 700.8 1062.8 700.6 1072.3 699.6 1072.3 699.4 1081.2 698.4 1081.2 698.2 1082.7 697.4 1082.7 697.2 1081.0 696.4 1081.0 696.2 1075.2 695.3 1075.2 695.1 1066.7 694.0 1066.7 693.8 1076.5 692.9 1076.5 692.7 1078.3 691.7 1078.3 691.5 1071.1 690.6 1071.1 690.4 1060.2 689.5 1060.2 689.3 1070.7 688.3 1070.7 688.1 1074.5 687.0 1074.5 686.8 1070.0 685.8 1070.0 685.6 1060.0 684.5 1060.0 684.3 1072.3 683.3 1072.3 683.1 1072.3 682.1 1072.3 681.9 1078.2 680.9 1078.2 680.7 1063.6 679.8 1063.6 679.6 1065.3 678.7 1065.3 678.5 1061.1 677.5 1061.1 677.3 1077.7 676.4 1077.7 676.2 1074.1 675.2 1074.1 675.0 1077.7 673.9 1077.7 673.7 1074.8 672.7 1074.8 672.5 1075.5 671.4 1075.5 671.2 1043.3 670.2 1043.3 670.0 1080.1 669.0 1080.1 668.8 1080.9 668.0 1080.9 667.8 1073.7 666.9 1073.7 666.7 1058.8 665.7 1058.8 665.5 1073.2 664.4 1073.2 664.2 1076.5 663.1 1076.5 662.9 1054.6 662.1 1054.6 661.9 1050.0 661.1 1050.0 660.9 1063.2 660.2 1063.2 660.0 1027.5 659.2 1027.5 659.0 1062.3 658.2 1062.3 658.0 1079.8 657.2 1079.8 657.0 1082.7 656.2 1082.7 656.0 1024.6 655.1 1024.6 654.9 1069.3 653.8 1069.3 653.6 1071.3 652.6 1071.3 652.4 1073.5 651.3 1073.5 651.1 1073.2 650.1 1073.2 649.9 1078.0 648.8 1078.0 648.6 1081.1 647.8 1081.1 647.6 1074.5 646.9 1074.5 646.7 1076.5 645.9 1076.5 645.7 1081.4 644.7 1081.4 644.5 1072.4 643.6 1072.4 643.4 1080.3 642.5 1080.3 642.3 1075.1 641.5 1075.1 641.3 1077.9 640.6 1077.9 640.4 1076.2 639.6 1076.2 639.4 1073.8 638.5 1073.8 638.3 1078.8 637.4 1078.8 637.2 1075.6 636.3 1075.6 636.1 1026.1 635.0 1026.1 634.8 1072.3 633.7 1072.3 633.5 993.8 632.5 993.8 632.3 1072.4 631.2 1072.4 631.0 1080.6 630.0 1080.6 629.8 1072.0 628.7 1072.0 628.5 1033.5 627.5 1033.5 627.3 1077.7 626.3 1077.7 626.1 1072.5 625.2 1072.5 625.0 1075.5 624.2 1075.5 624.0 1072.6 623.1 1072.6 622.9 1062.9 622.0 1062.9 621.8 1081.4 620.9 1081.4 620.7 1040.0 619.8 1040.0 619.6 1036.0 618.8 1036.0 618.6 1076.4 617.7 1076.4 617.5 1072.7 616.6 1072.7 616.4 1069.9 615.6 1069.9 615.4 1067.3 614.5 1067.3 614.3 1050.0 613.4 1050.0 613.2 1070.2 612.4 1070.2 612.2 1077.4 611.3 1077.4 611.1 1067.3 610.3 1067.3 610.1 1077.8 609.2 1077.8 609.0 1077.3 608.2 1077.3 608.0 1082.8 607.2 1082.8 607.0 1068.1 606.3 1068.1 606.1 1081.6 605.4 1081.6 605.2 1075.6 604.4 1075.6 604.2 1079.4 603.3 1079.4 603.1 1074.3 602.3 1074.3 602.1 1050.3 601.1 1050.3 600.9 1033.0 599.8 1033.0 599.6 1072.2 598.6 1072.2 598.4 1081.1 597.4 1081.1 597.2 1026.7 596.4 1026.7 596.2 1073.7 595.4 1073.7 595.2 1060.9 594.3 1060.9 594.1 1047.8 593.0 1047.8 592.8 1080.5 591.8 1080.5 591.6 1067.0 590.7 1067.0 590.5 1077.8 589.6 1077.8 589.4 1082.2 588.6 1082.2 588.4 1078.1 587.5 1078.1 587.3 1081.0 586.5 1081.0 586.3 1081.6 585.4 1081.6 585.2 1056.6 584.2 1056.6 584.0 1054.6 583.0 1054.6 582.8 1082.6 581.8 1082.6 581.6 1073.7 580.7 1073.7 580.5 1074.6 579.6 1074.6 579.4 1077.7 578.5 1077.7 578.3 1078.9 577.2 1078.9 577.0 1080.5 576.0 1080.5 575.8 1072.0 574.7 1072.0 574.5 1078.7 573.4 1078.7 573.2 1074.2 572.2 1074.2 572.0 1081.7 570.9 1081.7 570.7 1078.9 569.7 1078.9 569.5 1074.3 568.4 1074.3 568.2 1075.0 567.3 1075.0 567.1 1072.3 566.3 1072.3 566.1 1073.5 565.3 1073.5 565.1 1082.2 564.5 1082.2 564.3 1076.7 563.4 1076.7 563.2 1029.8 562.1 1029.8 561.9 1081.9 561.0 1081.9 560.8 1080.9 559.9 1080.9 559.7 1076.5 558.8 1076.5 558.6 1073.0 557.8 1073.0 557.6 1080.8 556.8 1080.8 556.6 1051.0 555.9 1051.0 555.7 1026.7 554.9 1026.7 554.7 1072.0 553.9 1072.0 553.7 1074.9 552.9 1074.9 552.7 1070.2 551.8 1070.2 551.6 1074.0 550.7 1074.0 550.5 1078.0 549.6 1078.0 549.4 1071.8 548.3 1071.8 548.1 1060.7 547.1 1060.7 546.9 1074.5 545.8 1074.5 545.6 1065.0 544.5 1065.0 544.3 1077.5 543.3 1077.5 543.1 1081.4 542.0 1081.4 541.8 1051.1 540.9 1051.1 540.7 1048.7 539.8 1048.7 539.6 1075.3 538.7 1075.3 538.5 1065.9 537.6 1065.9 537.4 1065.7 536.5 1065.7 536.3 1080.1 535.5 1080.1 535.3 1075.3 534.4 1075.3 534.2 1080.1 533.2 1080.1 533.0 1064.0 532.0 1064.0 531.8 1075.3 530.9 1075.3 530.7 1055.9 529.7 1055.9 529.5 1060.5 528.5 1060.5 528.3 1080.1 527.2 1080.1 527.0 1072.9 525.9 1072.9 525.7 1066.2 524.7 1066.2 524.5 1057.5 523.4 1057.5 523.2 1070.7 522.2 1070.7 522.0 1072.6 520.9 1072.6 520.7 1075.8 519.7 1075.8 519.5 1016.0 518.6 1016.0 518.4 1077.0 517.4 1077.0 517.2 1076.0 516.2 1076.0 516.0 1073.8 515.1 1073.8 514.9 1067.4 513.9 1067.4 513.7 1062.0 512.7 1062.0 512.5 1074.5 511.6 1074.5 511.4 1055.8 510.5 1055.8 510.2 1080.4 509.4 1080.4 509.1 1078.4 508.2 1078.4 508.0 1071.3 507.1 1071.3 506.9 1026.5 505.8 1026.5 505.6 1063.9 504.6 1063.9 504.4 1065.5 503.3 1065.5 503.1 1078.1 502.3 1078.1 502.1 1079.4 501.4 1079.4 501.2 1079.6 500.4 1079.6 500.2 1075.2 499.1 1075.2 498.9 1072.6 497.8 1072.6 497.6 1063.9 496.6 1063.9 496.4 1051.4 495.3 1051.4 495.1 1065.2 494.0 1065.2 493.8 1062.8 492.9 1062.8 492.6 1063.4 491.8 1063.4 491.5 1072.8 490.7 1072.8 490.4 1076.2 489.5 1076.2 489.3 1077.9 488.4 1077.9 488.1 1076.3 487.2 1076.3 487.0 1081.7 486.0 1081.7 485.8 1075.3 484.9 1075.3 484.6 1042.9 483.7 1042.9 483.5 1031.9 482.7 1031.9 482.5 1079.6 481.8 1079.6 481.6 1060.6 480.8 1060.6 480.6 1062.6 479.5 1062.6 479.3 1081.9 478.2 1081.9 478.0 1067.2 477.0 1067.2 476.8 1081.7 475.7 1081.7 475.5 1050.1 474.4 1050.1 474.2 1044.8 473.3 1044.8 473.1 1063.2 472.3 1063.2 472.1 1075.0 471.3 1075.0 471.1 1082.9 470.3 1082.9 470.1 1079.7 469.3 1079.7 469.1 1082.3 468.3 1082.3 468.1 1074.1 467.3 1074.1 467.1 1076.1 466.3 1076.1 466.1 1060.2 465.2 1060.2 465.0 1051.3 464.1 1051.3 463.9 1061.6 463.0 1061.6 462.8 1014.1 461.9 1014.1 461.7 1077.3 460.7 1077.3 460.5 1074.0 459.4 1074.0 459.2 1064.7 458.1 1064.7 457.9 1058.2 457.0 1058.2 456.8 1082.7 455.9 1082.7 455.7 1071.4 454.8 1071.4 454.6 1065.8 453.7 1065.8 453.5 1075.5 452.6 1075.5 452.4 1072.7 451.5 1072.7 451.3 1082.4 450.4 1082.4 450.2 1063.3 449.3 1063.3 449.1 1051.1 448.1 1051.1 447.9 1074.8 446.8 1074.8 446.6 1063.0 445.5 1063.0 445.3 1054.3 444.3 1054.3 444.1 1072.1 443.0 1072.1 442.8 1082.2 441.8 1082.2 441.6 1072.9 440.5 1072.9 440.3 1077.7 439.3 1077.7 439.1 1075.8 438.0 1075.8 437.8 1075.1 436.8 1075.1 436.6 1078.5 435.5 1078.5 435.3 1074.6 434.3 1074.6 434.1 1082.2 433.2 1082.2 433.0 1075.1 432.1 1075.1 431.9 1076.5 431.0 1076.5 430.8 1080.7 429.8 1080.7 429.6 1076.4 428.7 1076.4 428.5 1069.6 427.5 1069.6 427.3 1080.3 426.4 1080.3 426.2 1075.9 425.2 1075.9 425.0 1073.2 424.1 1073.2 423.8 1079.4 422.9 1079.4 422.7 993.7 421.7 993.7 421.5 988.5 420.4 988.5 420.2 1063.5 419.1 1063.5 418.9 1082.8 417.9 1082.8 417.7 1076.5 416.6 1076.5 416.4 1082.8 415.4 1082.8 415.2 1062.7 414.3 1062.7 414.1 1069.6 413.2 1069.6 413.0 1068.8 412.1 1068.8 411.9 1032.0 410.9 1032.0 410.7 1008.4 409.8 1008.4 409.6 1080.2 408.7 1080.2 408.5 1067.5 407.5 1067.5 407.3 1052.6 406.4 1052.6 406.2 1073.9 405.3 1073.9 405.1 1063.4 404.1 1063.4 403.9 1051.2 402.8 1051.2 402.6 1074.4 401.7 1074.4 401.5 1081.8 400.6 1081.8 400.4 1041.2 399.5 1041.2 399.3 1073.0 398.4 1073.0 398.2 1019.3 397.4 1019.3 397.2 999.5 396.3 999.5 396.1 1076.0 395.2 1076.0 395.0 1079.0 394.1 1079.0 393.9 1065.9 392.8 1065.9 392.6 1073.4 391.5 1073.4 391.3 1080.7 390.2 1080.7 390.0 1064.5 389.0 1064.5 388.8 1061.5 387.9 1061.5 387.6 1064.1 386.7 1064.1 386.5 1075.2 385.5 1075.2 385.3 1080.0 384.4 1080.0 384.1 1075.2 383.2 1075.2 383.0 1065.0 382.1 1065.0 381.8 1055.6 381.0 1055.6 380.8 1079.8 379.9 1079.8 379.6 1033.7 378.8 1033.7 378.5 1068.5 377.7 1068.5 377.4 1075.4 376.6 1075.4 376.3 1081.5 375.5 1081.5 375.2 1069.1 374.4 1069.1 374.1 1060.2 373.2 1060.2 373.0 1063.3 372.2 1063.3 371.9 1073.4 371.0 1073.4 370.8 1076.5 369.7 1076.5 369.5 1057.4 368.4 1057.4 368.2 1051.6 367.2 1051.6 367.0 1082.2 365.9 1082.2 365.7 1077.4 364.6 1077.4 364.4 1059.3 363.6 1059.3 363.4 1043.0 362.9 1043.0 362.7 1062.7 362.0 1062.7 361.8 1074.2 361.0 1074.2 360.8 1076.7 360.0 1076.7 359.8 1079.2 359.1 1079.2 358.8 1074.5 358.2 1074.5 357.9 1063.3 357.2 1063.3 357.0 1073.8 356.4 1073.8 356.1 1078.0 355.5 1078.0 355.2 1064.4 354.4 1064.4 354.2 1076.0 353.1 1076.0 352.9 1073.9 351.8 1073.9 351.6 1063.5 350.7 1063.5 350.5 1070.0 349.6 1070.0 349.4 1072.2 348.5 1072.2 348.3 1018.2 347.4 1018.2 347.2 1080.6 346.4 1080.6 346.1 1073.9 345.2 1073.9 345.0 1082.2 344.2 1082.2 343.9 1047.0 343.1 1047.0 342.9 1075.2 342.0 1075.2 341.8 1073.3 340.8 1073.3 340.6 1063.0 339.7 1063.0 339.5 1071.5 338.6 1071.5 338.4 1057.2 337.5 1057.2 337.3 1066.9 336.4 1066.9 336.2 1062.8 335.3 1062.8 335.1 1073.6 334.2 1073.6 334.0 1076.6 333.1 1076.6 332.9 1069.4 332.1 1069.4 331.8 1056.7 331.0 1056.7 330.8 1071.8 329.9 1071.8 329.6 1079.2 328.7 1079.2 328.5 1073.0 327.6 1073.0 327.4 1077.2 326.5 1077.2 326.3 1073.3 325.4 1073.3 325.2 1019.8 324.3 1019.8 324.1 1010.8 323.3 1010.8 323.1 1064.2 322.3 1064.2 322.1 1069.5 321.2 1069.5 321.0 1075.3 319.9 1075.3 319.7 1072.3 318.6 1072.3 318.4 1079.6 317.4 1079.6 317.2 1074.0 316.1 1074.0 315.9 1068.2 314.9 1068.2 314.7 1055.7 313.8 1055.7 313.6 1080.3 312.7 1080.3 312.5 1072.6 311.5 1072.6 311.3 1058.1 310.4 1058.1 310.2 1043.7 309.3 1043.7 309.1 1067.2 308.1 1067.2 307.9 1079.8 307.0 1079.8 306.8 1072.8 305.9 1072.8 305.6 1071.2 304.7 1071.2 304.5 1054.5 303.6 1054.5 303.4 1038.6 302.5 1038.6 302.3 1081.3 301.4 1081.3 301.2 1068.1 300.3 1068.1 300.1 1059.3 299.2 1059.3 299.0 1072.9 298.2 1072.9 297.9 1071.4 297.1 1071.4 296.9 1078.7 296.0 1078.7 295.8 1080.1 294.8 1080.1 294.6 1064.4 293.5 1064.4 293.3 1051.2 292.3 1051.2 292.1 1079.5 291.0 1079.5 290.8 1060.9 289.8 1060.9 289.6 1078.7 288.7 1078.7 288.5 1082.4 287.6 1082.4 287.4 1061.9 286.5 1061.9 286.3 1047.7 285.4 1047.7 285.1 1069.2 284.2 1069.2 284.0 1070.2 283.2 1070.2 282.9 1073.8 282.1 1073.8 281.9 1081.2 281.0 1081.2 280.8 1065.0 279.8 1065.0 279.6 1072.3 278.5 1072.3 278.3 1065.2 277.2 1065.2 277.0 1065.6 276.0 1065.6 275.8 1054.8 274.9 1054.8 274.7 1047.5 273.8 1047.5 273.6 1079.8 272.7 1079.8 272.5 1074.7 271.5 1074.7 271.3 1082.4 270.2 1082.4 270.0 1076.5 268.9 1076.5 268.7 1027.0 267.6 1027.0 267.4 1004.2 266.4 1004.2 266.2 1074.9 265.2 1074.9 265.0 1064.4 264.0 1064.4 263.8 1074.7 262.8 1074.7 262.6 1076.8 261.6 1076.8 261.4 1073.7 260.4 1073.7 260.2 1072.2 259.1 1072.2 258.9 1059.4 257.8 1059.4 257.6 1027.1 256.7 1027.1 256.5 1056.9 255.6 1056.9 255.4 1075.7 254.5 1075.7 254.3 1065.9 253.4 1065.9 253.2 1076.1 252.1 1076.1 251.9 1065.4 250.8 1065.4 250.6 1072.7 249.5 1072.7 249.3 1067.7 248.3 1067.7 248.1 1076.8 247.0 1076.8 246.8 1060.9 245.7 1060.9 245.5 1074.0 244.6 1074.0 244.4 1064.4 243.7 1064.4 243.5 1082.9 242.7 1082.9 242.5 1073.0 241.8 1073.0 241.7 979.1 240.8 979.1Z" fill="#2983c1" stroke="#2983c1" stroke-width="0.3"/>
<path d="M241.3 976.8V773.8M242.2 976.8V816.3M243.1 976.8V654.3M244.1 976.8V800.0M245.0 976.8V799.3M246.3 976.8V804.5M247.5 976.8V833.1M248.8 976.8V756.4M250.1 976.8V829.5M251.4 976.8V835.3M252.6 976.8V852.5M253.9 976.8V824.8M255.0 976.8V850.5M256.0 976.8V877.7M257.1 976.8V815.6M258.4 976.8V921.7M259.6 976.8V906.6M260.9 976.8V882.8M262.1 976.8V913.1M263.3 976.8V912.5M264.5 976.8V901.9M265.7 976.8V881.9M266.9 976.8V833.0M268.2 976.8V866.8M269.4 976.8V861.7M270.7 976.8V859.7M272.0 976.8V848.0M273.1 976.8V890.5M274.2 976.8V883.2M275.4 976.8V920.1M276.5 976.8V860.8M277.8 976.8V899.2M279.0 976.8V881.5M280.3 976.8V837.6M281.4 976.8V891.9M282.5 976.8V906.3M283.6 976.8V867.9M284.7 976.8V874.5M285.8 976.8V860.8M286.9 976.8V863.1M288.1 976.8V900.8M289.2 976.8V878.0M290.3 976.8V809.8M291.6 976.8V814.3M292.8 976.8V864.4M294.1 976.8V836.3M295.3 976.8V776.1M296.4 976.8V842.6M297.5 976.8V801.8M298.6 976.8V785.4M299.7 976.8V852.4M300.8 976.8V863.7M301.8 976.8V832.0M302.9 976.8V809.8M304.0 976.8V863.4M305.2 976.8V875.1M306.3 976.8V821.1M307.5 976.8V849.4M308.6 976.8V791.2M309.7 976.8V843.3M310.9 976.8V813.0M312.0 976.8V869.5M313.1 976.8V848.9M314.3 976.8V846.1M315.4 976.8V795.8M316.7 976.8V843.6M317.9 976.8V891.7M319.2 976.8V856.1M320.4 976.8V843.3M321.7 976.8V829.5M322.7 976.8V850.2M323.7 976.8V882.2M324.7 976.8V839.9M325.8 976.8V891.7M326.9 976.8V863.9M328.1 976.8V908.4M329.2 976.8V865.4M330.3 976.8V879.6M331.4 976.8V915.1M332.5 976.8V860.8M333.6 976.8V907.2M334.6 976.8V908.4M335.7 976.8V904.0M336.8 976.8V874.7M337.9 976.8V918.9M339.1 976.8V877.8M340.2 976.8V903.3M341.3 976.8V785.4M342.4 976.8V894.6M343.5 976.8V877.0M344.6 976.8V861.3M345.7 976.8V858.7M346.8 976.8V852.7M347.9 976.8V850.2M349.0 976.8V855.2M350.0 976.8V855.1M351.1 976.8V756.4M352.4 976.8V794.3M353.6 976.8V779.4M354.9 976.8V763.4M355.8 976.8V814.9M356.7 976.8V810.8M357.6 976.8V761.0M358.5 976.8V802.9M359.4 976.8V763.4M360.4 976.8V793.9M361.4 976.8V763.9M362.4 976.8V723.9M363.1 976.8V770.1M363.9 976.8V728.6M365.2 976.8V811.8M366.4 976.8V837.0M367.7 976.8V812.7M369.0 976.8V821.5M370.2 976.8V813.5M371.5 976.8V780.8M372.6 976.8V796.5M373.7 976.8V783.1M374.8 976.8V910.2M375.9 976.8V916.5M377.0 976.8V903.7M378.1 976.8V913.9M379.2 976.8V919.6M380.3 976.8V915.2M381.4 976.8V899.8M382.5 976.8V819.0M383.7 976.8V841.2M384.8 976.8V876.1M386.0 976.8V856.5M387.2 976.8V875.2M388.3 976.8V871.4M389.5 976.8V821.4M390.8 976.8V866.2M392.1 976.8V880.8M393.3 976.8V857.3M394.6 976.8V841.1M395.7 976.8V880.6M396.7 976.8V871.6M397.8 976.8V827.2M398.9 976.8V890.1M400.0 976.8V859.4M401.0 976.8V899.0M402.1 976.8V856.2M403.4 976.8V906.6M404.6 976.8V801.6M405.7 976.8V841.9M406.9 976.8V808.7M408.0 976.8V848.8M409.1 976.8V828.4M410.3 976.8V844.7M411.4 976.8V784.2M412.5 976.8V819.0M413.6 976.8V810.7M414.8 976.8V849.9M415.9 976.8V788.9M417.2 976.8V806.1M418.4 976.8V793.9M419.7 976.8V800.7M420.9 976.8V787.1M422.2 976.8V777.3M423.4 976.8V831.5M424.5 976.8V837.6M425.7 976.8V711.2M426.9 976.8V750.6M428.0 976.8V763.4M429.1 976.8V768.3M430.3 976.8V748.3M431.4 976.8V865.5M432.6 976.8V863.7M433.7 976.8V828.3M434.8 976.8V815.6M436.1 976.8V895.1M437.3 976.8V921.3M438.6 976.8V887.7M439.8 976.8V881.7M441.1 976.8V900.3M442.3 976.8V892.9M443.6 976.8V891.8M444.8 976.8V846.9M446.1 976.8V876.5M447.3 976.8V849.0M448.6 976.8V830.6M449.7 976.8V885.7M450.9 976.8V863.6M452.0 976.8V882.2M453.1 976.8V822.5M454.2 976.8V880.2M455.2 976.8V904.6M456.3 976.8V857.7M457.4 976.8V850.4M458.7 976.8V903.2M459.9 976.8V868.0M461.2 976.8V859.6M462.3 976.8V863.4M463.4 976.8V865.4M464.6 976.8V878.2M465.7 976.8V764.5M466.7 976.8V853.6M467.7 976.8V809.2M468.7 976.8V795.8M469.7 976.8V824.6M470.7 976.8V835.3M471.7 976.8V734.4M472.7 976.8V830.1M473.7 976.8V785.4M475.0 976.8V852.4M476.2 976.8V821.1M477.5 976.8V841.7M478.8 976.8V852.5M480.0 976.8V823.0M481.3 976.8V809.8M482.1 976.8V869.2M483.0 976.8V786.6M484.2 976.8V831.6M485.3 976.8V866.4M486.5 976.8V836.8M487.7 976.8V884.7M488.8 976.8V844.7M490.0 976.8V827.2M491.1 976.8V856.2M492.2 976.8V885.7M493.3 976.8V816.7M494.6 976.8V824.4M495.8 976.8V870.9M497.1 976.8V888.9M498.4 976.8V841.8M499.6 976.8V863.5M500.9 976.8V810.9M501.8 976.8V901.6M502.6 976.8V846.9M503.9 976.8V910.6M505.1 976.8V907.1M506.4 976.8V881.8M507.6 976.8V858.5M508.7 976.8V874.2M509.8 976.8V876.4M510.9 976.8V831.8M512.1 976.8V839.3M513.2 976.8V847.1M514.4 976.8V880.8M515.5 976.8V887.3M516.7 976.8V877.7M517.9 976.8V837.0M519.0 976.8V844.0M520.2 976.8V807.4M521.5 976.8V869.8M522.7 976.8V870.5M524.0 976.8V816.2M525.2 976.8V799.3M526.5 976.8V863.3M527.7 976.8V868.7M529.0 976.8V800.5M530.2 976.8V806.8M531.3 976.8V838.9M532.5 976.8V734.2M533.8 976.8V779.4M534.8 976.8V852.5M535.9 976.8V836.0M537.0 976.8V820.4M538.0 976.8V810.9M539.1 976.8V870.6M540.2 976.8V900.3M541.3 976.8V853.6M542.6 976.8V865.4M543.8 976.8V893.2M545.1 976.8V861.1M546.3 976.8V903.0M547.6 976.8V891.1M548.8 976.8V891.3M550.1 976.8V851.1M551.2 976.8V864.0M552.2 976.8V882.1M553.3 976.8V898.9M554.4 976.8V825.4M555.3 976.8V902.8M556.2 976.8V891.1M557.1 976.8V879.9M558.2 976.8V903.3M559.3 976.8V929.3M560.3 976.8V914.5M561.4 976.8V921.4M562.7 976.8V914.8M563.9 976.8V901.3M564.8 976.8V923.3M565.7 976.8V916.4M566.7 976.8V927.2M567.7 976.8V874.9M568.9 976.8V904.5M570.2 976.8V906.9M571.5 976.8V825.9M572.7 976.8V870.7M574.0 976.8V869.4M575.2 976.8V857.6M576.5 976.8V873.0M577.7 976.8V858.1M579.0 976.8V774.9M580.1 976.8V829.8M581.2 976.8V833.0M582.3 976.8V800.8M583.5 976.8V888.0M584.8 976.8V843.5M585.8 976.8V882.7M586.9 976.8V882.8M588.0 976.8V875.8M589.0 976.8V823.4M590.1 976.8V846.1M591.1 976.8V729.2M592.3 976.8V882.5M593.6 976.8V867.8M594.8 976.8V833.5M595.8 976.8V903.6M596.8 976.8V873.4M597.8 976.8V867.4M599.1 976.8V871.5M600.4 976.8V901.9M601.6 976.8V812.1M602.7 976.8V824.9M603.8 976.8V864.4M604.9 976.8V745.5M605.8 976.8V797.4M606.6 976.8V753.1M607.6 976.8V821.5M608.6 976.8V836.7M609.6 976.8V808.1M610.7 976.8V810.9M611.7 976.8V863.8M612.8 976.8V857.7M613.9 976.8V884.2M614.9 976.8V838.5M616.0 976.8V888.1M617.1 976.8V862.8M618.1 976.8V884.2M619.2 976.8V836.0M620.3 976.8V891.7M621.4 976.8V899.9M622.5 976.8V827.2M623.5 976.8V891.1M624.6 976.8V910.5M625.7 976.8V890.0M626.7 976.8V852.3M628.0 976.8V891.3M629.2 976.8V889.4M630.5 976.8V853.2M631.8 976.8V817.1M633.0 976.8V892.3M634.3 976.8V911.3M635.5 976.8V876.4M636.8 976.8V876.2M637.9 976.8V877.7M639.0 976.8V880.3M640.1 976.8V768.1M640.9 976.8V832.4M641.8 976.8V790.8M642.9 976.8V845.2M644.1 976.8V808.6M645.2 976.8V829.8M646.3 976.8V804.1M647.2 976.8V838.7M648.1 976.8V838.5M649.3 976.8V865.6M650.6 976.8V892.6M651.9 976.8V878.3M653.1 976.8V785.7M654.4 976.8V796.5M655.6 976.8V735.0M656.6 976.8V778.1M657.6 976.8V760.6M658.6 976.8V764.3M659.6 976.8V714.6M660.6 976.8V817.2M661.5 976.8V847.9M662.4 976.8V794.5M663.7 976.8V822.8M664.9 976.8V837.8M666.2 976.8V818.3M667.4 976.8V789.0M668.4 976.8V838.2M669.4 976.8V828.4M670.7 976.8V888.0M672.0 976.8V891.6M673.2 976.8V864.9M674.5 976.8V867.1M675.7 976.8V846.0M676.9 976.8V852.6M678.0 976.8V894.2M679.1 976.8V848.6M680.3 976.8V816.6M681.4 976.8V865.3M682.6 976.8V838.4M683.8 976.8V879.9M685.0 976.8V821.4M686.3 976.8V903.9M687.5 976.8V909.9M688.8 976.8V871.2M689.9 976.8V908.4M691.1 976.8V922.9M692.2 976.8V918.1M693.3 976.8V906.3M694.6 976.8V918.7M695.8 976.8V851.1M696.8 976.8V870.6M697.8 976.8V867.3M698.8 976.8V852.3M700.1 976.8V901.9M701.4 976.8V862.9M702.6 976.8V795.8M703.6 976.8V833.1M704.6 976.8V816.7M705.6 976.8V839.3M706.6 976.8V816.4M707.8 976.8V855.3M708.9 976.8V842.3M710.2 976.8V890.7M711.4 976.8V853.9M712.7 976.8V702.8M713.8 976.8V820.1M714.8 976.8V843.2M715.9 976.8V793.3M717.2 976.8V820.5M718.4 976.8V770.2M719.6 976.8V793.5M720.8 976.8V821.0M722.0 976.8V775.7M723.2 976.8V762.4M724.1 976.8V893.4M725.1 976.8V894.8M726.0 976.8V856.1M727.2 976.8V891.1M728.5 976.8V884.0M729.7 976.8V868.6M731.0 976.8V905.1M732.3 976.8V826.4M733.3 976.8V848.5M734.3 976.8V840.5M735.3 976.8V849.5M736.3 976.8V782.7M737.3 976.8V835.1M738.3 976.8V876.5M739.3 976.8V837.2M740.6 976.8V879.4M741.8 976.8V895.0M743.1 976.8V885.1M744.3 976.8V888.2M745.6 976.8V844.8M746.6 976.8V907.2M747.7 976.8V913.7M748.8 976.8V918.2M749.8 976.8V916.4M751.1 976.8V909.4M752.4 976.8V912.7M753.6 976.8V885.0M754.9 976.8V914.0M756.1 976.8V866.1M757.3 976.8V912.0M758.4 976.8V911.9M759.5 976.8V902.2M760.7 976.8V832.2M761.8 976.8V870.0M762.9 976.8V881.4M764.0 976.8V884.6M765.1 976.8V843.8M766.2 976.8V785.0M766.9 976.8V786.8M767.7 976.8V737.5M768.9 976.8V836.0M770.0 976.8V815.4M771.2 976.8V780.7M772.5 976.8V822.8M773.7 976.8V699.0M775.0 976.8V732.5M776.2 976.8V735.1M777.5 976.8V727.4M778.7 976.8V801.4M780.0 976.8V844.2M781.3 976.8V800.8M782.3 976.8V811.7M783.3 976.8V800.0M784.3 976.8V815.0M785.3 976.8V719.1M786.4 976.8V834.1M787.5 976.8V810.9M788.8 976.8V841.1M790.1 976.8V840.8M791.3 976.8V805.8M792.4 976.8V838.4M793.4 976.8V859.3M794.5 976.8V872.6M795.6 976.8V838.5M796.7 976.8V903.1M797.8 976.8V870.7M799.0 976.8V903.6M800.1 976.8V872.4M801.4 976.8V922.1M802.6 976.8V904.2M803.9 976.8V918.3M805.1 976.8V928.9M806.4 976.8V916.7M807.6 976.8V907.7M808.9 976.8V881.7M810.0 976.8V917.8M811.1 976.8V914.7M812.2 976.8V892.1M813.3 976.8V896.5M814.4 976.8V822.2M815.4 976.8V919.1M816.4 976.8V868.6M817.7 976.8V920.0M818.9 976.8V900.5M820.2 976.8V922.5M821.5 976.8V902.6M822.5 976.8V901.3M823.5 976.8V912.6M824.5 976.8V838.5M825.5 976.8V867.9M826.5 976.8V772.7M827.7 976.8V842.3M829.0 976.8V836.0M830.1 976.8V910.0M831.3 976.8V866.1M832.2 976.8V877.5M833.1 976.8V903.1M834.0 976.8V751.3M835.2 976.8V813.8M836.4 976.8V824.1M837.5 976.8V775.7M838.5 976.8V781.0M839.5 976.8V740.5M840.4 976.8V830.3M841.3 976.8V815.9M842.6 976.8V814.4M843.8 976.8V873.1M845.1 976.8V817.9M846.3 976.8V758.6M847.6 976.8V887.8M848.8 976.8V833.5M850.1 976.8V875.8M851.4 976.8V847.6M852.6 976.8V735.5M853.5 976.8V825.5M854.4 976.8V815.9M855.6 976.8V831.0M856.9 976.8V860.0M858.1 976.8V823.4M859.4 976.8V902.5M860.7 976.8V876.2M861.7 976.8V921.5M862.7 976.8V779.4M863.9 976.8V860.6M865.2 976.8V866.9M866.4 976.8V885.0M867.7 976.8V856.1M868.9 976.8V858.5M870.2 976.8V870.7M871.5 976.8V770.2M872.7 976.8V850.3M874.0 976.8V889.6M875.2 976.8V886.6M876.5 976.8V842.3M877.7 976.8V922.4M879.0 976.8V876.2M880.3 976.8V912.5M881.5 976.8V906.3M882.8 976.8V921.1M884.0 976.8V928.9M885.1 976.8V907.7M886.2 976.8V915.5M887.2 976.8V929.8M888.3 976.8V785.7M889.3 976.8V806.9M890.3 976.8V774.4M891.2 976.8V773.8M892.1 976.8V740.0M893.3 976.8V809.8M894.6 976.8V791.8M895.8 976.8V757.6M897.1 976.8V814.2M898.3 976.8V770.7M899.5 976.8V821.5M900.7 976.8V820.9M901.9 976.8V740.0M903.0 976.8V782.7M904.1 976.8V768.1M905.1 976.8V872.1M906.1 976.8V818.4M907.4 976.8V904.4M908.6 976.8V922.1M909.9 976.8V891.3M910.7 976.8V907.0M911.4 976.8V748.0M912.5 976.8V901.8M913.5 976.8V902.7M914.6 976.8V898.9M915.6 976.8V905.3M916.7 976.8V859.8M917.9 976.8V914.9M919.2 976.8V869.9M920.3 976.8V888.4M921.4 976.8V900.4M922.5 976.8V874.9M923.5 976.8V909.1M924.6 976.8V904.5M925.7 976.8V889.1M926.7 976.8V849.8M928.0 976.8V873.9M929.2 976.8V874.9M930.5 976.8V897.8M931.8 976.8V885.9M933.0 976.8V862.9M934.3 976.8V906.8M935.5 976.8V871.2M936.5 976.8V904.7M937.5 976.8V904.8M938.5 976.8V897.5M939.6 976.8V916.1M940.7 976.8V926.6M941.8 976.8V842.3M943.1 976.8V901.4M944.3 976.8V897.5M945.6 976.8V919.0M946.8 976.8V921.6M948.1 976.8V846.0M949.1 976.8V897.9M950.1 976.8V816.6M951.1 976.8V855.1M952.1 976.8V904.9M953.1 976.8V848.5M954.4 976.8V875.8M955.6 976.8V765.6M956.6 976.8V874.3M957.6 976.8V813.4M958.5 976.8V858.2M959.4 976.8V780.7M960.4 976.8V908.6M961.4 976.8V891.3M962.4 976.8V868.6M963.5 976.8V893.8M964.6 976.8V899.4M965.7 976.8V786.2M966.9 976.8V843.1M968.2 976.8V865.0M969.4 976.8V813.4M970.5 976.8V879.4M971.6 976.8V886.9M972.7 976.8V849.8M973.8 976.8V879.7M974.8 976.8V856.7M975.9 976.8V891.1M977.0 976.8V843.5M978.2 976.8V900.3M979.5 976.8V867.4M980.5 976.8V912.6M981.5 976.8V897.7M982.5 976.8V797.0M983.6 976.8V920.7M984.7 976.8V903.1M985.8 976.8V895.0M987.0 976.8V918.8M988.3 976.8V901.5M989.5 976.8V905.7M990.8 976.8V873.7M991.7 976.8V921.2M992.6 976.8V849.8M993.6 976.8V918.5M994.6 976.8V903.8M995.6 976.8V906.5M996.7 976.8V924.8M997.8 976.8V926.9M998.8 976.8V704.1M1000.1 976.8V802.2M1001.4 976.8V806.5M1002.6 976.8V797.0M1003.9 976.8V812.5M1005.1 976.8V851.9M1006.4 976.8V787.0M1007.4 976.8V873.3M1008.4 976.8V851.1M1009.3 976.8V883.6M1010.2 976.8V765.1M1011.4 976.8V845.7M1012.7 976.8V784.0M1013.7 976.8V852.2M1014.7 976.8V782.0M1015.9 976.8V807.6M1017.2 976.8V761.4M1018.3 976.8V771.8M1019.4 976.8V765.6M1020.5 976.8V732.2M1021.5 976.8V791.9M1022.5 976.8V790.1M1023.5 976.8V774.9M1024.6 976.8V814.1M1025.6 976.8V848.0M1026.7 976.8V808.3M1027.7 976.8V872.8M1028.7 976.8V828.8M1029.7 976.8V814.6M1031.0 976.8V840.7M1032.3 976.8V825.2M1033.5 976.8V879.7M1034.8 976.8V889.9M1036.0 976.8V841.0M1037.3 976.8V907.0M1038.5 976.8V912.1M1039.8 976.8V879.0M1041.1 976.8V872.4M1042.3 976.8V917.9M1043.6 976.8V824.2M1044.6 976.8V905.6M1045.6 976.8V838.5M1046.6 976.8V916.7M1047.6 976.8V915.0M1048.6 976.8V910.1M1049.8 976.8V906.1M1051.1 976.8V853.6M1052.2 976.8V890.6M1053.4 976.8V887.4M1054.5 976.8V895.8M1055.6 976.8V845.5M1056.9 976.8V901.9M1058.1 976.8V851.9M1059.4 976.8V776.4M1060.3 976.8V883.4M1061.2 976.8V873.7M1062.4 976.8V879.6M1063.7 976.8V807.1M1064.9 976.8V865.2M1066.2 976.8V853.6M1067.2 976.8V876.5M1068.2 976.8V828.9M1069.2 976.8V831.6M1070.2 976.8V833.2M1071.2 976.8V792.5M1072.5 976.8V874.1M1073.7 976.8V810.9M1075.0 976.8V823.7M1076.2 976.8V861.1M1077.5 976.8V761.9M1078.5 976.8V836.8M1079.5 976.8V827.2M1080.5 976.8V876.6M1081.5 976.8V847.8M1082.5 976.8V756.3M1083.8 976.8V820.9M1085.0 976.8V804.3M1086.3 976.8V768.1M1087.5 976.8V826.1M1088.8 976.8V770.7M1089.8 976.8V844.0M1090.8 976.8V815.9M1091.7 976.8V917.6M1092.6 976.8V891.3M1093.8 976.8V912.5M1095.1 976.8V847.3M1096.3 976.8V903.3M1097.6 976.8V885.0M1098.8 976.8V902.8M1100.1 976.8V901.0M1101.4 976.8V833.5M1102.6 976.8V912.0M1103.9 976.8V881.2M1105.1 976.8V921.4M1106.4 976.8V905.4M1107.6 976.8V901.3M1108.7 976.8V912.9M1109.8 976.8V918.4M1110.9 976.8V820.9M1111.8 976.8V831.8M1112.7 976.8V807.8M1113.9 976.8V897.6M1115.2 976.8V866.1M1116.4 976.8V913.5M1117.7 976.8V861.1M1118.9 976.8V908.4M1120.2 976.8V861.1M1121.5 976.8V866.2M1122.7 976.8V819.6M1123.8 976.8V870.7M1125.0 976.8V776.4M1126.1 976.8V815.1M1127.2 976.8V815.9M1128.1 976.8V911.7M1129.0 976.8V888.7M1130.0 976.8V896.7M1131.0 976.8V905.5M1132.0 976.8V761.4M1133.3 976.8V831.9M1134.5 976.8V784.5M1135.7 976.8V789.0M1136.9 976.8V794.0M1138.0 976.8V718.4M1139.0 976.8V829.1M1140.1 976.8V823.4M1141.3 976.8V847.5M1142.6 976.8V663.9M1143.8 976.8V686.5M1144.9 976.8V792.9M1146.0 976.8V821.7M1147.1 976.8V773.9M1148.0 976.8V861.5M1148.8 976.8V831.0M1150.1 976.8V857.2M1151.4 976.8V853.6M1152.4 976.8V876.2M1153.4 976.8V892.9M1154.4 976.8V862.4M1155.3 976.8V900.7M1156.2 976.8V922.2M1157.1 976.8V878.7M1158.4 976.8V901.5M1159.6 976.8V858.1M1160.7 976.8V907.0M1161.7 976.8V912.1M1162.7 976.8V891.3M1163.9 976.8V907.4M1165.2 976.8V919.8M1166.4 976.8V834.0M1167.7 976.8V873.8M1168.9 976.8V873.0M1170.2 976.8V856.1M1171.5 976.8V882.0M1172.7 976.8V864.1M1174.0 976.8V817.6M1175.2 976.8V920.1M1176.5 976.8V888.7M1177.6 976.8V900.6M1178.7 976.8V904.2M1179.7 976.8V852.3M1180.8 976.8V894.8M1181.8 976.8V923.8M1182.8 976.8V881.2M1184.0 976.8V774.4M1184.9 976.8V822.6M1185.8 976.8V738.0M1187.0 976.8V817.2M1188.3 976.8V795.8M1189.3 976.8V883.3M1190.3 976.8V822.2M1191.6 976.8V886.4M1192.8 976.8V838.5M1193.8 976.8V859.5M1194.8 976.8V730.5M1195.7 976.8V842.0M1196.6 976.8V780.7M1197.8 976.8V806.6M1199.1 976.8V768.1M1200.1 976.8V848.2M1201.1 976.8V833.0M1202.1 976.8V799.5M1203.4 976.8V866.0M1204.6 976.8V815.9M1205.9 976.8V844.9M1207.1 976.8V756.3M1208.1 976.8V846.5M1209.1 976.8V815.9M1210.0 976.8V866.8M1210.9 976.8V795.0M1212.2 976.8V853.1M1213.4 976.8V815.9M1214.5 976.8V865.9M1215.7 976.8V795.8M1216.8 976.8V899.9M1217.9 976.8V834.7M1219.2 976.8V903.2M1220.5 976.8V906.3M1221.7 976.8V904.8M1223.0 976.8V896.3M1224.1 976.8V911.5M1225.1 976.8V910.2M1226.2 976.8V867.4M1227.4 976.8V900.4M1228.5 976.8V913.9M1229.5 976.8V922.3M1230.5 976.8V887.5M1231.5 976.8V903.5M1232.5 976.8V828.9M1233.4 976.8V903.8M1234.3 976.8V896.3M1235.5 976.8V924.9M1236.8 976.8V928.9M1237.9 976.8V901.0M1239.0 976.8V908.2M1240.1 976.8V787.5M1241.2 976.8V852.3M1242.3 976.8V831.0M1243.6 976.8V845.1M1244.8 976.8V807.8M1245.8 976.8V861.0M1246.8 976.8V833.5M1247.8 976.8V838.5M1248.8 976.8V842.1M1249.8 976.8V782.5M1250.9 976.8V823.6M1251.9 976.8V797.0M1252.9 976.8V863.8M1253.9 976.8V826.9M1254.9 976.8V803.3M1256.1 976.8V844.1M1257.4 976.8V815.9M1258.6 976.8V861.1M1259.9 976.8V753.1M1260.7 976.8V831.3M1261.4 976.8V804.6M1262.3 976.8V870.8M1263.2 976.8V697.0M1264.0 976.8V849.8M1264.9 976.8V825.9M1265.9 976.8V900.8M1266.9 976.8V832.2M1268.0 976.8V857.6M1269.1 976.8V887.9M1270.2 976.8V821.7M1271.5 976.8V919.0M1272.7 976.8V882.5M1273.8 976.8V920.7M1274.8 976.8V899.9M1275.9 976.8V906.1M1277.0 976.8V867.4M1278.2 976.8V914.5M1279.5 976.8V917.2M1280.8 976.8V851.8M1281.8 976.8V903.4M1282.8 976.8V905.3M1283.8 976.8V891.3M1284.9 976.8V899.4M1286.0 976.8V920.3M1287.2 976.8V916.8M1288.3 976.8V868.1M1289.5 976.8V919.3M1290.8 976.8V891.3M1292.1 976.8V928.9M1293.3 976.8V913.1M1294.6 976.8V905.1M1295.7 976.8V927.6M1296.8 976.8V915.2M1297.8 976.8V876.2M1298.7 976.8V904.5M1299.6 976.8V802.1M1300.9 976.8V904.5M1302.1 976.8V851.1M1303.1 976.8V908.9M1304.1 976.8V869.2M1305.1 976.8V797.0M1306.4 976.8V856.7M1307.6 976.8V761.9M1308.6 976.8V904.0M1309.6 976.8V848.5M1310.7 976.8V878.9M1311.7 976.8V871.2M1312.7 976.8V815.9M1313.7 976.8V822.1M1314.7 976.8V790.8M1315.8 976.8V840.3M1316.9 976.8V760.1M1317.9 976.8V811.5M1318.9 976.8V809.6M1320.1 976.8V861.9M1321.3 976.8V807.4M1322.5 976.8V773.2M1323.6 976.8V849.0M1324.7 976.8V788.2M1325.6 976.8V845.5M1326.5 976.8V755.6M1327.5 976.8V845.6M1328.5 976.8V810.9M1329.7 976.8V881.2M1331.0 976.8V822.7M1332.3 976.8V881.8M1333.5 976.8V847.3M1334.8 976.8V900.5M1336.0 976.8V882.5M1337.3 976.8V903.9M1338.5 976.8V893.8M1339.8 976.8V928.2M1341.1 976.8V913.5M1342.3 976.8V885.0M1343.4 976.8V900.9M1344.5 976.8V924.2M1345.6 976.8V829.2M1346.6 976.8V868.7M1347.6 976.8V832.2M1348.5 976.8V880.9M1349.4 976.8V895.8M1350.4 976.8V879.9M1351.4 976.8V920.6M1352.5 976.8V906.9M1353.6 976.8V915.1M1354.9 976.8V913.9M1356.1 976.8V917.4M1357.4 976.8V791.5M1358.4 976.8V900.4M1359.4 976.8V856.1M1360.4 976.8V900.7M1361.4 976.8V884.0M1362.4 976.8V779.4M1363.4 976.8V817.1M1364.4 976.8V798.3M1365.3 976.8V838.6M1366.2 976.8V777.7M1367.2 976.8V811.0M1368.2 976.8V779.4M1369.1 976.8V872.1M1369.9 976.8V853.6M1371.0 976.8V888.5M1372.1 976.8V857.1M1373.2 976.8V770.2M1374.1 976.8V844.2M1375.0 976.8V800.8M1376.2 976.8V858.5M1377.5 976.8V668.4M1378.7 976.8V816.5M1380.0 976.8V784.5M1381.3 976.8V838.2M1382.5 976.8V803.3M1383.8 976.8V868.1M1385.0 976.8V853.6M1386.3 976.8V887.8M1387.5 976.8V836.0M1388.8 976.8V844.6M1390.1 976.8V794.0M1391.3 976.8V904.9M1392.6 976.8V846.0M1393.7 976.8V904.0M1394.7 976.8V925.3M1395.8 976.8V858.6M1396.8 976.8V916.5M1397.8 976.8V918.0M1398.8 976.8V891.3M1399.8 976.8V925.8M1400.9 976.8V878.7M1401.9 976.8V901.0M1402.9 976.8V915.4M1403.9 976.8V877.4M1404.9 976.8V900.1M1405.9 976.8V876.2M1407.1 976.8V917.3M1408.4 976.8V891.3M1409.6 976.8V902.1M1410.9 976.8V864.9M1411.8 976.8V903.3M1412.7 976.8V774.4M1413.9 976.8V914.4M1415.2 976.8V859.8M1416.3 976.8V875.9M1417.4 976.8V886.1M1418.4 976.8V833.5M1419.3 976.8V871.2M1420.2 976.8V836.0M1421.2 976.8V861.8M1422.2 976.8V807.6M1423.2 976.8V906.5M1424.2 976.8V893.5M1425.2 976.8V895.0M1426.1 976.8V913.5M1427.1 976.8V921.6M1428.0 976.8V736.7M1428.7 976.8V792.2M1429.5 976.8V738.0M1430.2 976.8V785.7M1431.0 976.8V775.0M1432.3 976.8V840.2M1433.6 976.8V800.5" fill="none" stroke="#2983c1" stroke-width="2.0"/>
<path d="M922.9 862.7V977.7M779.3 966.0V1022.0M837.0 1003.0V1069.0M1144.3 1022.0V1060.0M427.3 923.7V980.0M354.6 980.0V1040.0M333.5 900.0V952.0M725.5 905.0V1000.0M731.0 900.0V952.0M1033.5 915.0V975.0M1246.5 930.0V985.0M612.4 940.0V1010.0M1316.2 960.0V1030.0M500.5 925.0V990.0" fill="none" stroke="#8fc4e8" stroke-width="1" opacity="0.85"/>
<rect x="183.1" y="634" width="1311.5" height="474" fill="none" stroke="#555" stroke-width="1.35"/>
<path d="M179.3 1087.0H183M179.3 1029.0H183M179.3 971.0H183M179.3 913.0H183M179.3 855.0H183M179.3 797.0H183M179.3 739.0H183M179.3 681.0H183M420.6 1108V1111.6M658.8 1108V1111.6M897.2 1108V1111.6M1135.5 1108V1111.6M1373.9 1108V1111.6" stroke="#444" stroke-width="0.9" fill="none"/>
<text x="174.6" y="1090.9" font-size="10.6" text-anchor="end">0</text>
<text x="174.6" y="1032.9" font-size="10.6" text-anchor="end">5</text>
<text x="174.6" y="974.9" font-size="10.6" text-anchor="end">10</text>
<text x="174.6" y="916.9" font-size="10.6" text-anchor="end">15</text>
<text x="174.6" y="858.9" font-size="10.6" text-anchor="end">20</text>
<text x="174.6" y="800.9" font-size="10.6" text-anchor="end">25</text>
<text x="174.6" y="742.9" font-size="10.6" text-anchor="end">30</text>
<text x="174.6" y="684.9" font-size="10.6" text-anchor="end">35</text>
<text x="420.6" y="1123.9" font-size="10.6" text-anchor="middle">2008</text>
<text x="658.8" y="1123.9" font-size="10.6" text-anchor="middle">2012</text>
<text x="897.2" y="1123.9" font-size="10.6" text-anchor="middle">2016</text>
<text x="1135.5" y="1123.9" font-size="10.6" text-anchor="middle">2020</text>
<text x="1373.9" y="1123.9" font-size="10.6" text-anchor="middle">2024</text>
<text x="838" y="1139" font-size="10.6" text-anchor="middle">time</text>
<text x="838" y="627.2" font-size="12.72" text-anchor="middle" fill="#333">height = 150.0 [m], longitude = 4.0, latitude =...</text>
<text transform="translate(141.9 871.4) rotate(-90)" font-size="10.6" text-anchor="middle">magnitude of horizontal</text>
<text transform="translate(153.5 871.7) rotate(-90)" font-size="10.6" text-anchor="middle">velocity [m s**-1]</text>
</svg>

<!-- output scroll arrows -->
<svg class="abs" style="left:1514px;top:614px;" width="14" height="12" viewBox="0 0 14 12"><path d="M0.9 10.3 L7 1.3 L13.1 10.3 Z" fill="#4a4a4a"/></svg>
<svg class="abs" style="left:1514px;top:1138px;" width="14" height="12" viewBox="0 0 14 12"><path d="M0.9 1.6 L7 10.2 L13.1 1.6 Z" fill="#4a4a4a"/></svg>

<!-- right gutter -->
<div class="abs" style="left:1562px;top:42px;width:3px;height:1110px;background:#2a2a2a;"></div>
<div class="abs" style="left:1563px;top:42px;width:1px;height:1110px;background:#3f3f3f;"></div>
<div class="abs" style="left:1549.5px;top:550.5px;width:14px;height:312.5px;background:#4a4a4a;"></div>
<div class="abs" style="left:1557px;top:65px;width:6px;height:14px;background:#e8505b;"></div>

<!-- mouse pointer -->
<svg class="abs" style="left:1184px;top:196px;" width="24" height="32" viewBox="0 0 24 32"><path d="M3.9 4.3 L3.9 24.2 L8.6 19.9 L11.6 26.4 L14.8 25.1 L11.9 18.6 L17.8 18.4 Z" fill="#ffffff" stroke="#111111" stroke-width="1.3" stroke-linejoin="round"/></svg>

</body>
</html>
